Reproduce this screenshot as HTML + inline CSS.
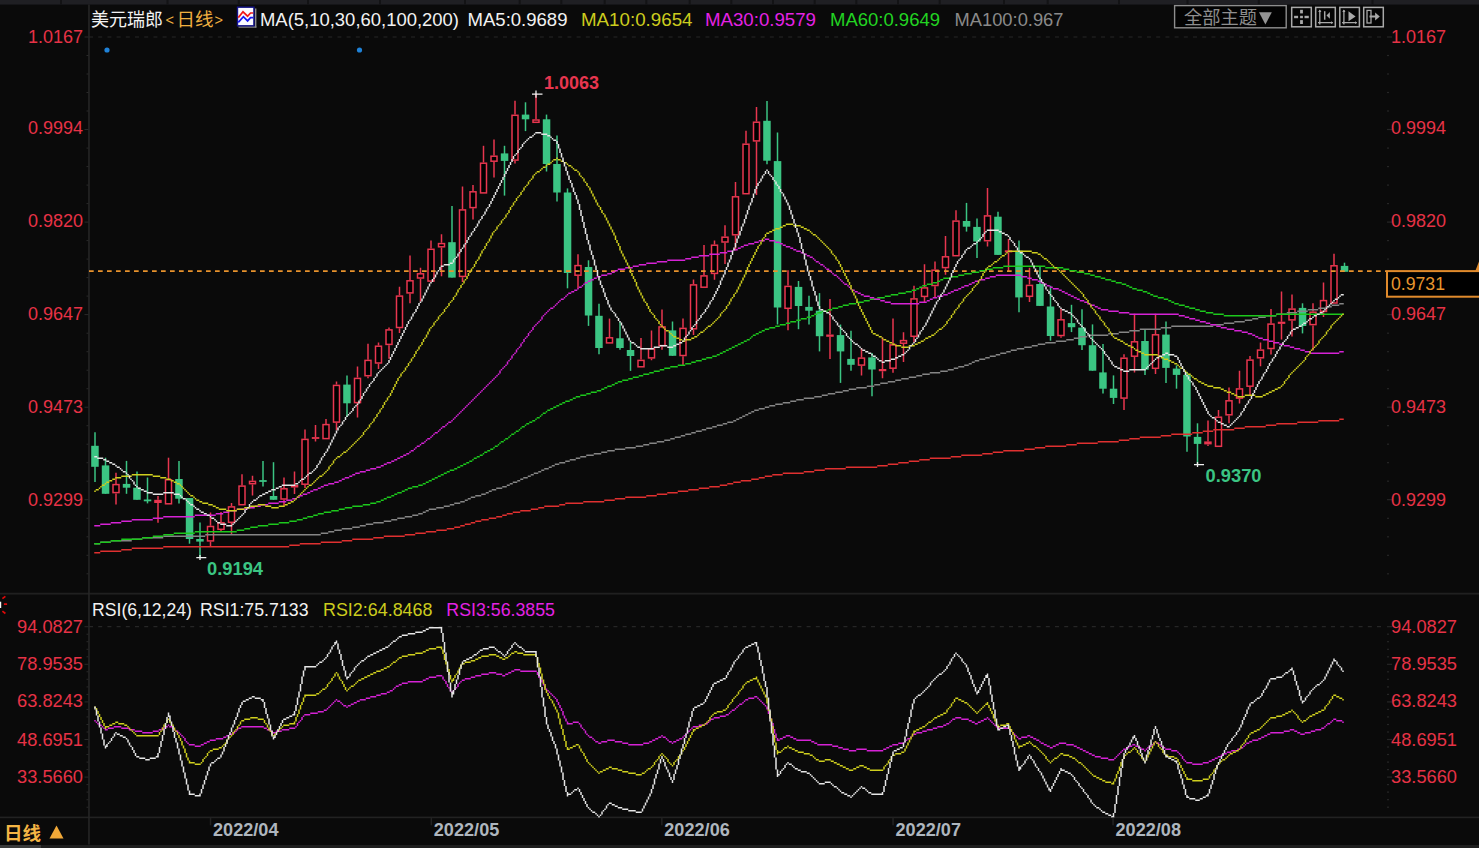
<!DOCTYPE html>
<html lang="zh"><head><meta charset="utf-8"><title>美元瑞郎 日线</title>
<style>html,body{margin:0;padding:0;background:#0a0a0a;overflow:hidden}svg{display:block}text{font-family:"Liberation Sans","Noto Sans CJK SC",sans-serif}</style>
</head><body>
<svg width="1479" height="848" viewBox="0 0 1479 848">
<rect width="1479" height="848" fill="#0a0a0a"/>
<rect x="0" y="0" width="1479" height="4.6" fill="#1f1f23"/>
<rect x="60" y="0" width="2" height="4.5" fill="#131315"/>
<rect x="166.5" y="0" width="2" height="4.5" fill="#131315"/>
<rect x="237.8" y="0" width="2" height="4.5" fill="#131315"/>
<rect x="307" y="0" width="2" height="4.5" fill="#131315"/>
<rect x="379" y="0" width="2" height="4.5" fill="#131315"/>
<rect x="464" y="0" width="2" height="4.5" fill="#131315"/>
<rect x="518.7" y="0" width="2" height="4.5" fill="#131315"/>
<rect x="560.3" y="0" width="2" height="4.5" fill="#131315"/>
<rect x="603.7" y="0" width="2" height="4.5" fill="#131315"/>
<rect x="645.3" y="0" width="2" height="4.5" fill="#131315"/>
<rect x="688.7" y="0" width="2" height="4.5" fill="#131315"/>
<rect x="730.3" y="0" width="2" height="4.5" fill="#131315"/>
<rect x="772" y="0" width="2" height="4.5" fill="#131315"/>
<rect x="813.7" y="0" width="2" height="4.5" fill="#131315"/>
<rect x="855.3" y="0" width="2" height="4.5" fill="#131315"/>
<rect x="897" y="0" width="2" height="4.5" fill="#131315"/>
<rect x="938.7" y="0" width="2" height="4.5" fill="#131315"/>
<rect x="1003" y="0" width="2" height="4.5" fill="#131315"/>
<rect x="1046.7" y="0" width="2" height="4.5" fill="#131315"/>
<rect x="1118" y="0" width="2" height="4.5" fill="#131315"/>
<rect x="1186.5" y="0" width="2" height="4.5" fill="#131315"/>
<rect x="1257.8" y="0" width="2" height="4.5" fill="#131315"/>
<rect x="1371.5" y="0" width="2" height="4.5" fill="#131315"/>
<rect x="0" y="592.7" width="1479" height="1.9" fill="#202020"/>
<rect x="0" y="816.6" width="1479" height="1.6" fill="#222222"/>
<rect x="88.2" y="4.5" width="1.5" height="840" fill="#272727"/>
<rect x="0" y="845" width="1479" height="3" fill="#1e1e1e"/>
<rect x="0" y="845" width="41" height="3" fill="#3a3a3a"/>
<line x1="89" y1="37" x2="1386" y2="37" stroke="#262626" stroke-width="1.2" stroke-dasharray="4,5.2"/>
<line x1="89" y1="626.7" x2="1386" y2="626.7" stroke="#262626" stroke-width="1.2" stroke-dasharray="4,5.2"/>
<rect x="84.5" y="36.5" width="4" height="1" fill="#2a2a2a"/><rect x="1387" y="36.4" width="5" height="1.2" fill="#262626"/><rect x="86.5" y="55" width="2" height="1" fill="#2a2a2a"/><rect x="1387" y="54.9" width="2" height="1.2" fill="#262626"/><rect x="86.5" y="73.5" width="2" height="1" fill="#2a2a2a"/><rect x="1387" y="73.4" width="2" height="1.2" fill="#262626"/><rect x="86.5" y="92" width="2" height="1" fill="#2a2a2a"/><rect x="1387" y="91.9" width="2" height="1.2" fill="#262626"/><rect x="86.5" y="110.5" width="2" height="1" fill="#2a2a2a"/><rect x="1387" y="110.4" width="2" height="1.2" fill="#262626"/><rect x="84.5" y="129" width="4" height="1" fill="#2a2a2a"/><rect x="1387" y="128.9" width="5" height="1.2" fill="#262626"/><rect x="86.5" y="147.6" width="2" height="1" fill="#2a2a2a"/><rect x="1387" y="147.5" width="2" height="1.2" fill="#262626"/><rect x="86.5" y="166.1" width="2" height="1" fill="#2a2a2a"/><rect x="1387" y="166" width="2" height="1.2" fill="#262626"/><rect x="86.5" y="184.6" width="2" height="1" fill="#2a2a2a"/><rect x="1387" y="184.5" width="2" height="1.2" fill="#262626"/><rect x="86.5" y="203.1" width="2" height="1" fill="#2a2a2a"/><rect x="1387" y="203" width="2" height="1.2" fill="#262626"/><rect x="84.5" y="221.6" width="4" height="1" fill="#2a2a2a"/><rect x="1387" y="221.5" width="5" height="1.2" fill="#262626"/><rect x="86.5" y="240.1" width="2" height="1" fill="#2a2a2a"/><rect x="1387" y="240" width="2" height="1.2" fill="#262626"/><rect x="86.5" y="258.6" width="2" height="1" fill="#2a2a2a"/><rect x="1387" y="258.5" width="2" height="1.2" fill="#262626"/><rect x="86.5" y="277.1" width="2" height="1" fill="#2a2a2a"/><rect x="1387" y="277" width="2" height="1.2" fill="#262626"/><rect x="86.5" y="295.6" width="2" height="1" fill="#2a2a2a"/><rect x="1387" y="295.5" width="2" height="1.2" fill="#262626"/><rect x="84.5" y="314.1" width="4" height="1" fill="#2a2a2a"/><rect x="1387" y="314" width="5" height="1.2" fill="#262626"/><rect x="86.5" y="332.7" width="2" height="1" fill="#2a2a2a"/><rect x="1387" y="332.6" width="2" height="1.2" fill="#262626"/><rect x="86.5" y="351.2" width="2" height="1" fill="#2a2a2a"/><rect x="1387" y="351.1" width="2" height="1.2" fill="#262626"/><rect x="86.5" y="369.7" width="2" height="1" fill="#2a2a2a"/><rect x="1387" y="369.6" width="2" height="1.2" fill="#262626"/><rect x="86.5" y="388.2" width="2" height="1" fill="#2a2a2a"/><rect x="1387" y="388.1" width="2" height="1.2" fill="#262626"/><rect x="84.5" y="406.7" width="4" height="1" fill="#2a2a2a"/><rect x="1387" y="406.6" width="5" height="1.2" fill="#262626"/><rect x="86.5" y="425.2" width="2" height="1" fill="#2a2a2a"/><rect x="1387" y="425.1" width="2" height="1.2" fill="#262626"/><rect x="86.5" y="443.7" width="2" height="1" fill="#2a2a2a"/><rect x="1387" y="443.6" width="2" height="1.2" fill="#262626"/><rect x="86.5" y="462.2" width="2" height="1" fill="#2a2a2a"/><rect x="1387" y="462.1" width="2" height="1.2" fill="#262626"/><rect x="86.5" y="480.7" width="2" height="1" fill="#2a2a2a"/><rect x="1387" y="480.6" width="2" height="1.2" fill="#262626"/><rect x="84.5" y="499.2" width="4" height="1" fill="#2a2a2a"/><rect x="1387" y="499.1" width="5" height="1.2" fill="#262626"/><rect x="86.5" y="517.8" width="2" height="1" fill="#2a2a2a"/><rect x="1387" y="517.7" width="2" height="1.2" fill="#262626"/><rect x="86.5" y="536.3" width="2" height="1" fill="#2a2a2a"/><rect x="1387" y="536.2" width="2" height="1.2" fill="#262626"/><rect x="86.5" y="554.8" width="2" height="1" fill="#2a2a2a"/><rect x="1387" y="554.7" width="2" height="1.2" fill="#262626"/><rect x="86.5" y="573.3" width="2" height="1" fill="#2a2a2a"/><rect x="1387" y="573.2" width="2" height="1.2" fill="#262626"/>
<rect x="84.5" y="626.2" width="4" height="1" fill="#2a2a2a"/><rect x="1387" y="626.1" width="5" height="1.2" fill="#262626"/><rect x="86.5" y="633.7" width="2" height="1" fill="#2a2a2a"/><rect x="1387" y="633.6" width="2" height="1.2" fill="#262626"/><rect x="86.5" y="641.2" width="2" height="1" fill="#2a2a2a"/><rect x="1387" y="641.1" width="2" height="1.2" fill="#262626"/><rect x="86.5" y="648.8" width="2" height="1" fill="#2a2a2a"/><rect x="1387" y="648.7" width="2" height="1.2" fill="#262626"/><rect x="86.5" y="656.3" width="2" height="1" fill="#2a2a2a"/><rect x="1387" y="656.2" width="2" height="1.2" fill="#262626"/><rect x="84.5" y="663.8" width="4" height="1" fill="#2a2a2a"/><rect x="1387" y="663.7" width="5" height="1.2" fill="#262626"/><rect x="86.5" y="671.3" width="2" height="1" fill="#2a2a2a"/><rect x="1387" y="671.2" width="2" height="1.2" fill="#262626"/><rect x="86.5" y="678.8" width="2" height="1" fill="#2a2a2a"/><rect x="1387" y="678.7" width="2" height="1.2" fill="#262626"/><rect x="86.5" y="686.4" width="2" height="1" fill="#2a2a2a"/><rect x="1387" y="686.3" width="2" height="1.2" fill="#262626"/><rect x="86.5" y="693.9" width="2" height="1" fill="#2a2a2a"/><rect x="1387" y="693.8" width="2" height="1.2" fill="#262626"/><rect x="84.5" y="701.4" width="4" height="1" fill="#2a2a2a"/><rect x="1387" y="701.3" width="5" height="1.2" fill="#262626"/><rect x="86.5" y="708.9" width="2" height="1" fill="#2a2a2a"/><rect x="1387" y="708.8" width="2" height="1.2" fill="#262626"/><rect x="86.5" y="716.4" width="2" height="1" fill="#2a2a2a"/><rect x="1387" y="716.3" width="2" height="1.2" fill="#262626"/><rect x="86.5" y="724" width="2" height="1" fill="#2a2a2a"/><rect x="1387" y="723.9" width="2" height="1.2" fill="#262626"/><rect x="86.5" y="731.5" width="2" height="1" fill="#2a2a2a"/><rect x="1387" y="731.4" width="2" height="1.2" fill="#262626"/><rect x="84.5" y="739" width="4" height="1" fill="#2a2a2a"/><rect x="1387" y="738.9" width="5" height="1.2" fill="#262626"/><rect x="86.5" y="746.5" width="2" height="1" fill="#2a2a2a"/><rect x="1387" y="746.4" width="2" height="1.2" fill="#262626"/><rect x="86.5" y="754" width="2" height="1" fill="#2a2a2a"/><rect x="1387" y="753.9" width="2" height="1.2" fill="#262626"/><rect x="86.5" y="761.6" width="2" height="1" fill="#2a2a2a"/><rect x="1387" y="761.5" width="2" height="1.2" fill="#262626"/><rect x="86.5" y="769.1" width="2" height="1" fill="#2a2a2a"/><rect x="1387" y="769" width="2" height="1.2" fill="#262626"/><rect x="84.5" y="776.6" width="4" height="1" fill="#2a2a2a"/><rect x="1387" y="776.5" width="5" height="1.2" fill="#262626"/><rect x="86.5" y="784.1" width="2" height="1" fill="#2a2a2a"/><rect x="1387" y="784" width="2" height="1.2" fill="#262626"/><rect x="86.5" y="791.6" width="2" height="1" fill="#2a2a2a"/><rect x="1387" y="791.5" width="2" height="1.2" fill="#262626"/><rect x="86.5" y="799.2" width="2" height="1" fill="#2a2a2a"/><rect x="1387" y="799.1" width="2" height="1.2" fill="#262626"/><rect x="86.5" y="806.7" width="2" height="1" fill="#2a2a2a"/><rect x="1387" y="806.6" width="2" height="1.2" fill="#262626"/>
<text x="28" y="43" font-size="18.6" fill="#e63246" text-anchor="start" font-weight="normal" textLength="55" lengthAdjust="spacingAndGlyphs">1.0167</text>
<text x="1391" y="43" font-size="18.6" fill="#e63246" text-anchor="start" font-weight="normal" textLength="55" lengthAdjust="spacingAndGlyphs">1.0167</text>
<text x="28" y="134.3" font-size="18.6" fill="#e63246" text-anchor="start" font-weight="normal" textLength="55" lengthAdjust="spacingAndGlyphs">0.9994</text>
<text x="1391" y="134.3" font-size="18.6" fill="#e63246" text-anchor="start" font-weight="normal" textLength="55" lengthAdjust="spacingAndGlyphs">0.9994</text>
<text x="28" y="227.4" font-size="18.6" fill="#e63246" text-anchor="start" font-weight="normal" textLength="55" lengthAdjust="spacingAndGlyphs">0.9820</text>
<text x="1391" y="227.4" font-size="18.6" fill="#e63246" text-anchor="start" font-weight="normal" textLength="55" lengthAdjust="spacingAndGlyphs">0.9820</text>
<text x="28" y="320.2" font-size="18.6" fill="#e63246" text-anchor="start" font-weight="normal" textLength="55" lengthAdjust="spacingAndGlyphs">0.9647</text>
<text x="1391" y="320.2" font-size="18.6" fill="#e63246" text-anchor="start" font-weight="normal" textLength="55" lengthAdjust="spacingAndGlyphs">0.9647</text>
<text x="28" y="413" font-size="18.6" fill="#e63246" text-anchor="start" font-weight="normal" textLength="55" lengthAdjust="spacingAndGlyphs">0.9473</text>
<text x="1391" y="413" font-size="18.6" fill="#e63246" text-anchor="start" font-weight="normal" textLength="55" lengthAdjust="spacingAndGlyphs">0.9473</text>
<text x="28" y="505.7" font-size="18.6" fill="#e63246" text-anchor="start" font-weight="normal" textLength="55" lengthAdjust="spacingAndGlyphs">0.9299</text>
<text x="1391" y="505.7" font-size="18.6" fill="#e63246" text-anchor="start" font-weight="normal" textLength="55" lengthAdjust="spacingAndGlyphs">0.9299</text>
<text x="17" y="632.5" font-size="18.6" fill="#e63246" text-anchor="start" font-weight="normal" textLength="66" lengthAdjust="spacingAndGlyphs">94.0827</text>
<text x="1391" y="632.5" font-size="18.6" fill="#e63246" text-anchor="start" font-weight="normal" textLength="66" lengthAdjust="spacingAndGlyphs">94.0827</text>
<text x="17" y="670.1" font-size="18.6" fill="#e63246" text-anchor="start" font-weight="normal" textLength="66" lengthAdjust="spacingAndGlyphs">78.9535</text>
<text x="1391" y="670.1" font-size="18.6" fill="#e63246" text-anchor="start" font-weight="normal" textLength="66" lengthAdjust="spacingAndGlyphs">78.9535</text>
<text x="17" y="707.3" font-size="18.6" fill="#e63246" text-anchor="start" font-weight="normal" textLength="66" lengthAdjust="spacingAndGlyphs">63.8243</text>
<text x="1391" y="707.3" font-size="18.6" fill="#e63246" text-anchor="start" font-weight="normal" textLength="66" lengthAdjust="spacingAndGlyphs">63.8243</text>
<text x="17" y="745.9" font-size="18.6" fill="#e63246" text-anchor="start" font-weight="normal" textLength="66" lengthAdjust="spacingAndGlyphs">48.6951</text>
<text x="1391" y="745.9" font-size="18.6" fill="#e63246" text-anchor="start" font-weight="normal" textLength="66" lengthAdjust="spacingAndGlyphs">48.6951</text>
<text x="17" y="783.3" font-size="18.6" fill="#e63246" text-anchor="start" font-weight="normal" textLength="66" lengthAdjust="spacingAndGlyphs">33.5660</text>
<text x="1391" y="783.3" font-size="18.6" fill="#e63246" text-anchor="start" font-weight="normal" textLength="66" lengthAdjust="spacingAndGlyphs">33.5660</text>
<g><path d="M95 432.3V482" stroke="#3bc583" stroke-width="1.5"/><rect x="91.2" y="445.8" width="7.5" height="21" fill="#3bc583"/><path d="M105.5 457.7V493.8" stroke="#3bc583" stroke-width="1.5"/><rect x="101.8" y="465.4" width="7.5" height="28.4" fill="#3bc583"/><path d="M116 472.8V483.9M116 493.4V504.5" stroke="#e8364f" stroke-width="1.5"/><rect x="113" y="484.6" width="6" height="8" fill="#000" stroke="#e8364f" stroke-width="1.5"/><path d="M126.5 460.9V493.8" stroke="#3bc583" stroke-width="1.5"/><rect x="122.8" y="483.9" width="7.5" height="3.8" fill="#3bc583"/><path d="M137 471.5V499.8" stroke="#3bc583" stroke-width="1.5"/><rect x="133.2" y="487.7" width="7.5" height="12.1" fill="#3bc583"/><path d="M147.5 477.5V503.4" stroke="#3bc583" stroke-width="1.5"/><rect x="143.8" y="499.5" width="7.5" height="1.8" fill="#3bc583"/><path d="M158 496V499.8M158 503V522.7" stroke="#e8364f" stroke-width="1.5"/><rect x="154.2" y="499.8" width="7.5" height="3.2" fill="#e8364f"/><path d="M168.5 457.7V479M168.5 504.5V504.5" stroke="#e8364f" stroke-width="1.5"/><rect x="165.5" y="479.8" width="6" height="24" fill="#000" stroke="#e8364f" stroke-width="1.5"/><path d="M179 461V503.4" stroke="#3bc583" stroke-width="1.5"/><rect x="175.2" y="479" width="7.5" height="19.7" fill="#3bc583"/><path d="M189.5 498V543.7" stroke="#3bc583" stroke-width="1.5"/><rect x="185.8" y="498" width="7.5" height="41" fill="#3bc583"/><path d="M200 522.5V558" stroke="#3bc583" stroke-width="1.5"/><rect x="196.2" y="539" width="7.5" height="2.6" fill="#3bc583"/><path d="M210.5 512.5V525.7M210.5 541.6V546.5" stroke="#e8364f" stroke-width="1.5"/><rect x="207.5" y="526.5" width="6" height="14.4" fill="#000" stroke="#e8364f" stroke-width="1.5"/><path d="M221 511.9V522M221 530V531.6" stroke="#e8364f" stroke-width="1.5"/><rect x="218" y="522.8" width="6" height="6.5" fill="#000" stroke="#e8364f" stroke-width="1.5"/><path d="M231.5 503V506.2M231.5 523.1V534.4" stroke="#e8364f" stroke-width="1.5"/><rect x="228.5" y="506.9" width="6" height="15.4" fill="#000" stroke="#e8364f" stroke-width="1.5"/><path d="M242 474.3V485.4M242 505.5V505.5" stroke="#e8364f" stroke-width="1.5"/><rect x="239" y="486.1" width="6" height="18.6" fill="#000" stroke="#e8364f" stroke-width="1.5"/><path d="M252.5 475.8V480.7M252.5 484.5V495.5" stroke="#e8364f" stroke-width="1.5"/><rect x="249.5" y="481.4" width="6" height="2.3" fill="#000" stroke="#e8364f" stroke-width="1.5"/><path d="M263 461V486.6" stroke="#3bc583" stroke-width="1.5"/><rect x="259.2" y="480.1" width="7.5" height="1.8" fill="#3bc583"/><path d="M273.5 462.2V499.8" stroke="#3bc583" stroke-width="1.5"/><rect x="269.8" y="496" width="7.5" height="3.8" fill="#3bc583"/><path d="M284 477.6V488M284 499.7V506" stroke="#e8364f" stroke-width="1.5"/><rect x="281" y="488.8" width="6" height="10.2" fill="#000" stroke="#e8364f" stroke-width="1.5"/><path d="M294.5 471.6V485M294.5 487.5V494" stroke="#e8364f" stroke-width="1.5"/><rect x="290.8" y="485" width="7.5" height="2.5" fill="#e8364f"/><path d="M305 429.6V438.7M305 485V488" stroke="#e8364f" stroke-width="1.5"/><rect x="302" y="439.4" width="6" height="44.8" fill="#000" stroke="#e8364f" stroke-width="1.5"/><path d="M315.5 425V437.1M315.5 438.8V441.5" stroke="#e8364f" stroke-width="1.5"/><rect x="311.8" y="437.1" width="7.5" height="1.8" fill="#e8364f"/><path d="M326 419V423.9M326 439.4V439.4" stroke="#e8364f" stroke-width="1.5"/><rect x="323" y="424.6" width="6" height="14" fill="#000" stroke="#e8364f" stroke-width="1.5"/><path d="M336.5 381.4V384.6M336.5 422.8V430.2" stroke="#e8364f" stroke-width="1.5"/><rect x="333.5" y="385.4" width="6" height="36.7" fill="#000" stroke="#e8364f" stroke-width="1.5"/><path d="M347 375.5V416.9" stroke="#3bc583" stroke-width="1.5"/><rect x="343.2" y="384.6" width="7.5" height="18.7" fill="#3bc583"/><path d="M357.5 366.5V377.6M357.5 403.3V417.5" stroke="#e8364f" stroke-width="1.5"/><rect x="354.5" y="378.4" width="6" height="24.2" fill="#000" stroke="#e8364f" stroke-width="1.5"/><path d="M368 343.8V359.7M368 376.5V378.2" stroke="#e8364f" stroke-width="1.5"/><rect x="365" y="360.4" width="6" height="15.3" fill="#000" stroke="#e8364f" stroke-width="1.5"/><path d="M378.5 342.4V345.5M378.5 363.8V369" stroke="#e8364f" stroke-width="1.5"/><rect x="375.5" y="346.2" width="6" height="16.8" fill="#000" stroke="#e8364f" stroke-width="1.5"/><path d="M389 327.5V329.2M389 345.2V358.7" stroke="#e8364f" stroke-width="1.5"/><rect x="386" y="329.9" width="6" height="14.5" fill="#000" stroke="#e8364f" stroke-width="1.5"/><path d="M399.5 286.8V295.3M399.5 328.2V333" stroke="#e8364f" stroke-width="1.5"/><rect x="396.5" y="296.1" width="6" height="31.4" fill="#000" stroke="#e8364f" stroke-width="1.5"/><path d="M410 255.4V280M410 293.6V303.3" stroke="#e8364f" stroke-width="1.5"/><rect x="407" y="280.8" width="6" height="12.1" fill="#000" stroke="#e8364f" stroke-width="1.5"/><path d="M420.5 267.7V273M420.5 278.7V301.6" stroke="#e8364f" stroke-width="1.5"/><rect x="417.5" y="273.8" width="6" height="4.2" fill="#000" stroke="#e8364f" stroke-width="1.5"/><path d="M431 240.5V248.6M431 281.9V281.9" stroke="#e8364f" stroke-width="1.5"/><rect x="428" y="249.3" width="6" height="31.8" fill="#000" stroke="#e8364f" stroke-width="1.5"/><path d="M441.5 234.3V242.8M441.5 247.5V276.2" stroke="#e8364f" stroke-width="1.5"/><rect x="438.5" y="243.6" width="6" height="3.2" fill="#000" stroke="#e8364f" stroke-width="1.5"/><path d="M452 206V277.6" stroke="#3bc583" stroke-width="1.5"/><rect x="448.2" y="242.2" width="7.5" height="35.4" fill="#3bc583"/><path d="M462.5 186.5V209.2M462.5 277.2V282.1" stroke="#e8364f" stroke-width="1.5"/><rect x="459.5" y="209.9" width="6" height="66.5" fill="#000" stroke="#e8364f" stroke-width="1.5"/><path d="M473 185V191M473 208.3V219.4" stroke="#e8364f" stroke-width="1.5"/><rect x="470" y="191.8" width="6" height="15.8" fill="#000" stroke="#e8364f" stroke-width="1.5"/><path d="M483.5 145.8V162.4M483.5 193.6V193.6" stroke="#e8364f" stroke-width="1.5"/><rect x="480.5" y="163.2" width="6" height="29.7" fill="#000" stroke="#e8364f" stroke-width="1.5"/><path d="M494 139.6V155.4M494 161.9V177.5" stroke="#e8364f" stroke-width="1.5"/><rect x="491" y="156.2" width="6" height="5" fill="#000" stroke="#e8364f" stroke-width="1.5"/><path d="M504.5 145.8V195.6" stroke="#3bc583" stroke-width="1.5"/><rect x="500.8" y="153.4" width="7.5" height="7.5" fill="#3bc583"/><path d="M515 100.8V114.6M515 160.9V163.4" stroke="#e8364f" stroke-width="1.5"/><rect x="512" y="115.3" width="6" height="44.8" fill="#000" stroke="#e8364f" stroke-width="1.5"/><path d="M525.5 102.3V131.1" stroke="#3bc583" stroke-width="1.5"/><rect x="521.8" y="114.6" width="7.5" height="4.7" fill="#3bc583"/><path d="M536 93.8V119.3M536 123.1V123.1" stroke="#e8364f" stroke-width="1.5"/><rect x="533" y="120" width="6" height="2.3" fill="#000" stroke="#e8364f" stroke-width="1.5"/><path d="M546.5 114.6V171.5" stroke="#3bc583" stroke-width="1.5"/><rect x="542.8" y="119.3" width="7.5" height="44.7" fill="#3bc583"/><path d="M557 135.4V201.4" stroke="#3bc583" stroke-width="1.5"/><rect x="553.2" y="164" width="7.5" height="28.5" fill="#3bc583"/><path d="M567.5 188.4V288.3" stroke="#3bc583" stroke-width="1.5"/><rect x="563.8" y="192.5" width="7.5" height="80.5" fill="#3bc583"/><path d="M578 254.3V264.9M578 276V288.3" stroke="#e8364f" stroke-width="1.5"/><rect x="575" y="265.6" width="6" height="9.6" fill="#000" stroke="#e8364f" stroke-width="1.5"/><path d="M588.5 260.3V325.9" stroke="#3bc583" stroke-width="1.5"/><rect x="584.8" y="267" width="7.5" height="48.5" fill="#3bc583"/><path d="M599 303.8V354.2" stroke="#3bc583" stroke-width="1.5"/><rect x="595.2" y="315.8" width="7.5" height="32.2" fill="#3bc583"/><path d="M609.5 318.6V337M609.5 343.6V343.6" stroke="#e8364f" stroke-width="1.5"/><rect x="606.5" y="337.8" width="6" height="5.1" fill="#000" stroke="#e8364f" stroke-width="1.5"/><path d="M620 322V349.7" stroke="#3bc583" stroke-width="1.5"/><rect x="616.2" y="338.3" width="7.5" height="9.7" fill="#3bc583"/><path d="M630.5 342V370.9" stroke="#3bc583" stroke-width="1.5"/><rect x="626.8" y="350" width="7.5" height="6" fill="#3bc583"/><path d="M641 338V359.6M641 367.5V367.5" stroke="#e8364f" stroke-width="1.5"/><rect x="638" y="360.4" width="6" height="6.4" fill="#000" stroke="#e8364f" stroke-width="1.5"/><path d="M651.5 330.5V348M651.5 358.6V360.3" stroke="#e8364f" stroke-width="1.5"/><rect x="648.5" y="348.8" width="6" height="9.1" fill="#000" stroke="#e8364f" stroke-width="1.5"/><path d="M662 309.6V326.2M662 346.4V349.7" stroke="#e8364f" stroke-width="1.5"/><rect x="659" y="326.9" width="6" height="18.7" fill="#000" stroke="#e8364f" stroke-width="1.5"/><path d="M672.5 321.5V355.8" stroke="#3bc583" stroke-width="1.5"/><rect x="668.8" y="330.4" width="7.5" height="25.4" fill="#3bc583"/><path d="M683 318.5V327.7M683 356.3V364.9" stroke="#e8364f" stroke-width="1.5"/><rect x="680" y="328.4" width="6" height="27.1" fill="#000" stroke="#e8364f" stroke-width="1.5"/><path d="M693.5 279.4V284.1M693.5 329.5V335" stroke="#e8364f" stroke-width="1.5"/><rect x="690.5" y="284.9" width="6" height="43.9" fill="#000" stroke="#e8364f" stroke-width="1.5"/><path d="M704 245.1V275.1M704 287.9V287.9" stroke="#e8364f" stroke-width="1.5"/><rect x="701" y="275.9" width="6" height="11.3" fill="#000" stroke="#e8364f" stroke-width="1.5"/><path d="M714.5 240.6V244.4M714.5 274.1V279.8" stroke="#e8364f" stroke-width="1.5"/><rect x="711.5" y="245.2" width="6" height="28.2" fill="#000" stroke="#e8364f" stroke-width="1.5"/><path d="M725 225.3V236.4M725 242.7V263.9" stroke="#e8364f" stroke-width="1.5"/><rect x="722" y="237.2" width="6" height="4.8" fill="#000" stroke="#e8364f" stroke-width="1.5"/><path d="M735.5 182V196M735.5 235.5V250.5" stroke="#e8364f" stroke-width="1.5"/><rect x="732.5" y="196.8" width="6" height="38" fill="#000" stroke="#e8364f" stroke-width="1.5"/><path d="M746 130.8V143.5M746 194.5V194.5" stroke="#e8364f" stroke-width="1.5"/><rect x="743" y="144.2" width="6" height="49.5" fill="#000" stroke="#e8364f" stroke-width="1.5"/><path d="M756.5 107V121.4M756.5 141.6V195.1" stroke="#e8364f" stroke-width="1.5"/><rect x="753.5" y="122.2" width="6" height="18.7" fill="#000" stroke="#e8364f" stroke-width="1.5"/><path d="M767 101V164.3" stroke="#3bc583" stroke-width="1.5"/><rect x="763.2" y="120.8" width="7.5" height="39.9" fill="#3bc583"/><path d="M777.5 132.5V324.5" stroke="#3bc583" stroke-width="1.5"/><rect x="773.8" y="161.1" width="7.5" height="146.4" fill="#3bc583"/><path d="M788 270.3V285.6M788 309V330.2" stroke="#e8364f" stroke-width="1.5"/><rect x="785" y="286.4" width="6" height="21.9" fill="#000" stroke="#e8364f" stroke-width="1.5"/><path d="M798.5 281V329.2" stroke="#3bc583" stroke-width="1.5"/><rect x="794.8" y="286.9" width="7.5" height="19.1" fill="#3bc583"/><path d="M809 295.8V324.5" stroke="#3bc583" stroke-width="1.5"/><rect x="805.2" y="306.9" width="7.5" height="3.8" fill="#3bc583"/><path d="M819.5 293.1V351.4" stroke="#3bc583" stroke-width="1.5"/><rect x="815.8" y="310.7" width="7.5" height="25.5" fill="#3bc583"/><path d="M830 299V334.5M830 336.8V358.9" stroke="#e8364f" stroke-width="1.5"/><rect x="826.2" y="334.5" width="7.5" height="2.3" fill="#e8364f"/><path d="M840.5 324.5V382.9" stroke="#3bc583" stroke-width="1.5"/><rect x="836.8" y="335.1" width="7.5" height="16.3" fill="#3bc583"/><path d="M851 330.8V370.8" stroke="#3bc583" stroke-width="1.5"/><rect x="847.2" y="358.9" width="7.5" height="5.9" fill="#3bc583"/><path d="M861.5 348.3V357.4M861.5 365.9V375.4" stroke="#e8364f" stroke-width="1.5"/><rect x="858.5" y="358.1" width="6" height="7" fill="#000" stroke="#e8364f" stroke-width="1.5"/><path d="M872 353V396.2" stroke="#3bc583" stroke-width="1.5"/><rect x="868.2" y="357.4" width="7.5" height="12.1" fill="#3bc583"/><path d="M882.5 337.6V369M882.5 371.2V378.2" stroke="#e8364f" stroke-width="1.5"/><rect x="878.8" y="369" width="7.5" height="2.2" fill="#e8364f"/><path d="M893 318.5V344.2M893 369V372.7" stroke="#e8364f" stroke-width="1.5"/><rect x="890" y="344.9" width="6" height="23.3" fill="#000" stroke="#e8364f" stroke-width="1.5"/><path d="M903.5 332.2V339.9M903.5 344V362" stroke="#e8364f" stroke-width="1.5"/><rect x="900.5" y="340.6" width="6" height="2.6" fill="#000" stroke="#e8364f" stroke-width="1.5"/><path d="M914 285.7V298.2M914 337.1V342.2" stroke="#e8364f" stroke-width="1.5"/><rect x="911" y="298.9" width="6" height="37.4" fill="#000" stroke="#e8364f" stroke-width="1.5"/><path d="M924.5 264.2V287.1M924.5 297.1V303" stroke="#e8364f" stroke-width="1.5"/><rect x="921.5" y="287.9" width="6" height="8.5" fill="#000" stroke="#e8364f" stroke-width="1.5"/><path d="M935 261.5V269.5M935 286.3V297.7" stroke="#e8364f" stroke-width="1.5"/><rect x="932" y="270.2" width="6" height="15.3" fill="#000" stroke="#e8364f" stroke-width="1.5"/><path d="M945.5 236.1V256M945.5 268.3V274.8" stroke="#e8364f" stroke-width="1.5"/><rect x="942.5" y="256.8" width="6" height="10.8" fill="#000" stroke="#e8364f" stroke-width="1.5"/><path d="M956 210.3V220.3M956 256.4V256.4" stroke="#e8364f" stroke-width="1.5"/><rect x="953" y="221.1" width="6" height="34.6" fill="#000" stroke="#e8364f" stroke-width="1.5"/><path d="M966.5 202.9V231.6" stroke="#3bc583" stroke-width="1.5"/><rect x="962.8" y="221" width="7.5" height="5.7" fill="#3bc583"/><path d="M977 218.4V258.1" stroke="#3bc583" stroke-width="1.5"/><rect x="973.2" y="226.9" width="7.5" height="14.6" fill="#3bc583"/><path d="M987.5 188V215.2M987.5 241.5V246.4" stroke="#e8364f" stroke-width="1.5"/><rect x="984.5" y="215.9" width="6" height="24.8" fill="#000" stroke="#e8364f" stroke-width="1.5"/><path d="M998 211.8V254.9" stroke="#3bc583" stroke-width="1.5"/><rect x="994.2" y="216.7" width="7.5" height="38.2" fill="#3bc583"/><path d="M1008.5 239V250.3M1008.5 252.4V271.9" stroke="#e8364f" stroke-width="1.5"/><rect x="1004.8" y="250.3" width="7.5" height="2.1" fill="#e8364f"/><path d="M1019 240.5V312.3" stroke="#3bc583" stroke-width="1.5"/><rect x="1015.2" y="250.7" width="7.5" height="46.7" fill="#3bc583"/><path d="M1029.5 267.7V284.6M1029.5 297V302" stroke="#e8364f" stroke-width="1.5"/><rect x="1026.5" y="285.4" width="6" height="10.9" fill="#000" stroke="#e8364f" stroke-width="1.5"/><path d="M1040 267V305.9" stroke="#3bc583" stroke-width="1.5"/><rect x="1036.2" y="284" width="7.5" height="21.9" fill="#3bc583"/><path d="M1050.5 285.7V340.7" stroke="#3bc583" stroke-width="1.5"/><rect x="1046.8" y="306.5" width="7.5" height="29.5" fill="#3bc583"/><path d="M1061 309V319M1061 336.2V337.8" stroke="#e8364f" stroke-width="1.5"/><rect x="1058" y="319.8" width="6" height="15.7" fill="#000" stroke="#e8364f" stroke-width="1.5"/><path d="M1071.5 304.8V332.1" stroke="#3bc583" stroke-width="1.5"/><rect x="1067.8" y="323.1" width="7.5" height="4.1" fill="#3bc583"/><path d="M1082 309.3V349.9" stroke="#3bc583" stroke-width="1.5"/><rect x="1078.2" y="327.6" width="7.5" height="17.6" fill="#3bc583"/><path d="M1092.5 324.4V370.7" stroke="#3bc583" stroke-width="1.5"/><rect x="1088.8" y="345.2" width="7.5" height="25.5" fill="#3bc583"/><path d="M1103 344.1V393.6" stroke="#3bc583" stroke-width="1.5"/><rect x="1099.2" y="372.4" width="7.5" height="16.3" fill="#3bc583"/><path d="M1113.5 375.4V404" stroke="#3bc583" stroke-width="1.5"/><rect x="1109.8" y="388.7" width="7.5" height="9.2" fill="#3bc583"/><path d="M1124 354.3V357.5M1124 398.9V410" stroke="#e8364f" stroke-width="1.5"/><rect x="1121" y="358.2" width="6" height="39.9" fill="#000" stroke="#e8364f" stroke-width="1.5"/><path d="M1134.5 313.8V341M1134.5 356.9V372.4" stroke="#e8364f" stroke-width="1.5"/><rect x="1131.5" y="341.8" width="6" height="14.4" fill="#000" stroke="#e8364f" stroke-width="1.5"/><path d="M1145 328.9V375" stroke="#3bc583" stroke-width="1.5"/><rect x="1141.2" y="341" width="7.5" height="28.6" fill="#3bc583"/><path d="M1155.5 313.8V334M1155.5 369V373.9" stroke="#e8364f" stroke-width="1.5"/><rect x="1152.5" y="334.8" width="6" height="33.5" fill="#000" stroke="#e8364f" stroke-width="1.5"/><path d="M1166 321.4V383" stroke="#3bc583" stroke-width="1.5"/><rect x="1162.2" y="334.6" width="7.5" height="33.3" fill="#3bc583"/><path d="M1176.5 365.4V388.7" stroke="#3bc583" stroke-width="1.5"/><rect x="1172.8" y="368.6" width="7.5" height="6.3" fill="#3bc583"/><path d="M1187 371.7V451.8" stroke="#3bc583" stroke-width="1.5"/><rect x="1183.2" y="374.9" width="7.5" height="61.6" fill="#3bc583"/><path d="M1197.5 423.3V464.5" stroke="#3bc583" stroke-width="1.5"/><rect x="1193.8" y="436.9" width="7.5" height="7" fill="#3bc583"/><path d="M1208 420.6V441.4M1208 444.4V446" stroke="#e8364f" stroke-width="1.5"/><rect x="1204.2" y="441.4" width="7.5" height="3" fill="#e8364f"/><path d="M1218.5 410V416.5M1218.5 447.1V447.1" stroke="#e8364f" stroke-width="1.5"/><rect x="1215.5" y="417.2" width="6" height="29.1" fill="#000" stroke="#e8364f" stroke-width="1.5"/><path d="M1229 387.6V400M1229 415.5V423.3" stroke="#e8364f" stroke-width="1.5"/><rect x="1226" y="400.8" width="6" height="14" fill="#000" stroke="#e8364f" stroke-width="1.5"/><path d="M1239.5 370.8V388.1M1239.5 398.8V403.5" stroke="#e8364f" stroke-width="1.5"/><rect x="1236.5" y="388.9" width="6" height="9.2" fill="#000" stroke="#e8364f" stroke-width="1.5"/><path d="M1250 356.1V359.3M1250 386.9V395" stroke="#e8364f" stroke-width="1.5"/><rect x="1247" y="360.1" width="6" height="26.1" fill="#000" stroke="#e8364f" stroke-width="1.5"/><path d="M1260.5 342.5V349.3M1260.5 358.5V366.3" stroke="#e8364f" stroke-width="1.5"/><rect x="1257.5" y="350.1" width="6" height="7.7" fill="#000" stroke="#e8364f" stroke-width="1.5"/><path d="M1271 309V323.4M1271 349.3V354.6" stroke="#e8364f" stroke-width="1.5"/><rect x="1268" y="324.1" width="6" height="24.4" fill="#000" stroke="#e8364f" stroke-width="1.5"/><path d="M1281.5 291.4V321.7M1281.5 323.9V339.4" stroke="#e8364f" stroke-width="1.5"/><rect x="1277.8" y="321.7" width="7.5" height="2.2" fill="#e8364f"/><path d="M1292 294.6V308.4M1292 320.7V336.6" stroke="#e8364f" stroke-width="1.5"/><rect x="1289" y="309.1" width="6" height="10.8" fill="#000" stroke="#e8364f" stroke-width="1.5"/><path d="M1302.5 303.3V333.4" stroke="#3bc583" stroke-width="1.5"/><rect x="1298.8" y="307.9" width="7.5" height="18.1" fill="#3bc583"/><path d="M1313 303.3V311.5M1313 325.4V350.4" stroke="#e8364f" stroke-width="1.5"/><rect x="1310" y="312.2" width="6" height="12.4" fill="#000" stroke="#e8364f" stroke-width="1.5"/><path d="M1323.5 282.5V299.9M1323.5 312.2V316.9" stroke="#e8364f" stroke-width="1.5"/><rect x="1320.5" y="300.6" width="6" height="10.8" fill="#000" stroke="#e8364f" stroke-width="1.5"/><path d="M1334 253.8V265M1334 303.7V303.7" stroke="#e8364f" stroke-width="1.5"/><rect x="1331" y="265.8" width="6" height="37.2" fill="#000" stroke="#e8364f" stroke-width="1.5"/><path d="M1344.5 262.7V271.8" stroke="#3bc583" stroke-width="1.5"/><rect x="1340.8" y="265.9" width="7.5" height="5.9" fill="#3bc583"/></g>
<line x1="89" y1="271.2" x2="1386" y2="271.2" stroke="#e8922c" stroke-width="1.7" stroke-dasharray="4.7,4.3"/>
<g transform="translate(-0.25 0) scale(1.5)">
<path d="M63 368.5h4M67 367.5h14M81 366.5h7M88 365.5h21M109 364.5h84M193 363.5h7M200 362.5h14M214 361.5h14M228 360.5h7M235 359.5h14M249 358.5h7M256 357.5h14M270 356.5h7M277 355.5h7M284 354.5h7M291 353.5h7M298 352.5h5M303 351.5h4M307 350.5h3M310 349.5h4M314 348.5h3M317 347.5h4M321 346.5h5M326 345.5h5M331 344.5h4M335 343.5h3M338 342.5h4M342 341.5h5M347 340.5h7M354 339.5h5M359 338.5h4M363 337.5h10M373 336.5h4M377 335.5h12M389 334.5h14M403 333.5h7M410 332.5h7M417 331.5h14M431 330.5h7M438 329.5h7M445 328.5h7M452 327.5h7M459 326.5h7M466 325.5h7M473 324.5h7M480 323.5h5M485 322.5h4M489 321.5h5M494 320.5h7M501 319.5h5M506 318.5h4M510 317.5h5M515 316.5h7M522 315.5h14M536 314.5h7M543 313.5h7M550 312.5h14M564 311.5h21M585 310.5h7M592 309.5h7M599 308.5h7M606 307.5h7M613 306.5h7M620 305.5h14M634 304.5h7M641 303.5h14M655 302.5h7M662 301.5h7M669 300.5h14M683 299.5h7M690 298.5h7M697 297.5h14M711 296.5h7M718 295.5h14M732 294.5h14M746 293.5h7M753 292.5h7M760 291.5h14M774 290.5h7M781 289.5h14M795 288.5h7M802 287.5h7M809 286.5h14M823 285.5h7M830 284.5h14M844 283.5h7M851 282.5h14M865 281.5h14M879 280.5h14M893 279.5h3" fill="none" stroke="#e03030" stroke-width="1"/>
<path d="M63 362.5h4M67 361.5h7M74 360.5h14M88 359.5h7M95 358.5h14M109 357.5h28M137 356.5h77M214 355.5h5M219 354.5h4M223 353.5h5M228 352.5h7M235 351.5h5M240 350.5h4M244 349.5h5M249 348.5h7M256 347.5h5M261 346.5h4M265 345.5h5M270 344.5h5M275 343.5h4M279 342.5h3M282 341.5h2M284 340.5h2M286 339.5h5M291 338.5h5M296 337.5h4M300 336.5h3M303 335.5h4M307 334.5h3M310 333.5h2M312 332.5h2M314 331.5h3M317 330.5h4M321 329.5h3M324 328.5h2M326 327.5h2M328 326.5h3M331 325.5h4M335 324.5h3M338 323.5h2M340 322.5h2M342 321.5h3M345 320.5h2M347 319.5h2M349 318.5h3M352 317.5h2M354 316.5h2M356 315.5h3M359 314.5h2M361 313.5h2M363 312.5h3M366 311.5h2M368 310.5h2M370 309.5h3M373 308.5h4M377 307.5h3M380 306.5h4M384 305.5h3M387 304.5h4M391 303.5h5M396 302.5h5M401 301.5h4M405 300.5h5M410 299.5h7M417 298.5h7M424 297.5h5M429 296.5h4M433 295.5h5M438 294.5h5M443 293.5h4M447 292.5h3M450 291.5h4M454 290.5h3M457 289.5h4M461 288.5h3M464 287.5h4M468 286.5h3M471 285.5h4M475 284.5h3M478 283.5h4M482 282.5h3M485 281.5h4M489 280.5h2M491 279.5h2M493 278.5h2M495 277.5h2M497 276.5h2M499 275.5h2M501 274.5h2M503 273.5h3M506 272.5h4M510 271.5h3M513 270.5h4M517 269.5h5M522 268.5h5M527 267.5h4M531 266.5h5M536 265.5h7M543 264.5h5M548 263.5h4M552 262.5h5M557 261.5h5M562 260.5h4M566 259.5h5M571 258.5h7M578 257.5h5M583 256.5h4M587 255.5h5M592 254.5h5M597 253.5h4M601 252.5h5M606 251.5h5M611 250.5h4M615 249.5h5M620 248.5h7M627 247.5h5M632 246.5h4M636 245.5h3M639 244.5h4M643 243.5h3M646 242.5h2M648 241.5h2M650 240.5h3M653 239.5h4M657 238.5h3M660 237.5h4M664 236.5h3M667 235.5h4M671 234.5h3M674 233.5h4M678 232.5h5M683 231.5h5M688 230.5h4M692 229.5h5M697 228.5h7M704 227.5h7M711 226.5h5M716 225.5h4M720 224.5h5M725 223.5h14M739 222.5h7M746 221.5h7M753 220.5h7M760 219.5h14M774 218.5h7M781 217.5h28M809 216.5h7M816 215.5h7M823 214.5h7M830 213.5h5M835 212.5h4M839 211.5h5M844 210.5h7M851 209.5h7M858 208.5h7M865 207.5h7M872 206.5h7M879 205.5h5M884 204.5h4M888 203.5h5M893 202.5h3" fill="none" stroke="#858585" stroke-width="1"/>
<path d="M63 362.5h4M67 361.5h7M74 360.5h7M81 359.5h14M95 358.5h7M102 357.5h7M109 356.5h7M116 355.5h14M130 354.5h28M158 353.5h5M163 352.5h4M167 351.5h5M172 350.5h7M179 349.5h7M186 348.5h7M193 347.5h5M198 346.5h4M202 345.5h3M205 344.5h4M209 343.5h3M212 342.5h4M216 341.5h5M221 340.5h5M226 339.5h4M230 338.5h5M235 337.5h7M242 336.5h5M247 335.5h4M251 334.5h3M254 333.5h2M256 332.5h2M258 331.5h3M261 330.5h2M263 329.5h2M265 328.5h3M268 327.5h2M270 326.5h2M272 325.5h3M275 324.5h4M279 323.5h3M282 322.5h2M284 321.5h2M286 320.5h2M288 319.5h2M290 318.5h2M292 317.5h2M294 316.5h2M296 315.5h2M298 314.5h2M300 313.5h3M303 312.5h2M305 311.5h2M307 310.5h2M309 309.5h2M311 308.5h2M313 307.5h2M315 306.5h1M316 305.5h2M318 304.5h2M320 303.5h2M322 302.5h1M323 301.5h2M325 300.5h2M327 299.5h2M329 298.5h1M330 297.5h2M332 296.5h1M333 295.5h1M334 294.5h2M336 293.5h1M337 292.5h2M339 291.5h1M340 290.5h1M341 289.5h2M343 288.5h1M344 287.5h2M346 286.5h1M347 285.5h1M348 284.5h2M350 283.5h1M351 282.5h2M353 281.5h2M355 280.5h2M357 279.5h1M358 278.5h2M360 277.5h1M361 276.5h1M362 275.5h2M364 274.5h1M365 273.5h2M367 272.5h2M369 271.5h2M371 270.5h2M373 269.5h2M375 268.5h2M377 267.5h3M380 266.5h2M382 265.5h2M384 264.5h3M387 263.5h4M391 262.5h3M394 261.5h4M398 260.5h3M401 259.5h2M403 258.5h2M405 257.5h3M408 256.5h2M410 255.5h2M412 254.5h3M415 253.5h4M419 252.5h3M422 251.5h4M426 250.5h3M429 249.5h4M433 248.5h3M436 247.5h4M440 246.5h3M443 245.5h4M447 244.5h5M452 243.5h5M457 242.5h4M461 241.5h3M464 240.5h4M468 239.5h3M471 238.5h4M475 237.5h3M478 236.5h2M480 235.5h2M482 234.5h2M484 233.5h2M486 232.5h2M488 231.5h2M490 230.5h2M492 229.5h2M494 228.5h2M496 227.5h2M498 226.5h2M500 225.5h1M501 224.5h1M502 223.5h2M504 222.5h2M506 221.5h2M508 220.5h2M510 219.5h3M513 218.5h4M517 217.5h3M520 216.5h4M524 215.5h3M527 214.5h4M531 213.5h3M534 212.5h4M538 211.5h3M541 210.5h2M543 209.5h2M545 208.5h3M548 207.5h4M552 206.5h3M555 205.5h4M559 204.5h3M562 203.5h4M566 202.5h5M571 201.5h5M576 200.5h4M580 199.5h5M585 198.5h5M590 197.5h4M594 196.5h5M599 195.5h5M604 194.5h4M608 193.5h3M611 192.5h2M613 191.5h2M615 190.5h3M618 189.5h4M622 188.5h3M625 187.5h2M627 186.5h2M629 185.5h5M634 184.5h5M639 183.5h4M643 182.5h5M648 181.5h5M653 180.5h4M657 179.5h5M662 178.5h7M669 177.5h28M697 178.5h12M709 179.5h4M713 180.5h5M718 181.5h5M723 182.5h4M727 183.5h3M730 184.5h4M734 185.5h3M737 186.5h4M741 187.5h3M744 188.5h4M748 189.5h3M751 190.5h2M753 191.5h2M755 192.5h3M758 193.5h4M762 194.5h3M765 195.5h2M767 196.5h2M769 197.5h3M772 198.5h4M776 199.5h3M779 200.5h2M781 201.5h2M783 202.5h3M786 203.5h4M790 204.5h3M793 205.5h4M797 206.5h3M800 207.5h4M804 208.5h5M809 209.5h7M816 210.5h35M851 209.5h45" fill="none" stroke="#1cc81c" stroke-width="1"/>
<path d="M63 350.5h4M67 349.5h7M74 348.5h7M81 347.5h7M88 346.5h14M102 345.5h7M109 344.5h21M130 343.5h14M144 342.5h5M149 341.5h4M153 340.5h5M158 339.5h7M165 338.5h5M170 337.5h4M174 336.5h5M179 335.5h7M186 334.5h5M191 333.5h4M195 332.5h3M198 331.5h2M200 330.5h2M202 329.5h3M205 328.5h2M207 327.5h2M209 326.5h3M212 325.5h2M214 324.5h2M216 323.5h3M219 322.5h4M223 321.5h3M226 320.5h2M228 319.5h2M230 318.5h3M233 317.5h2M235 316.5h2M237 315.5h3M240 314.5h4M244 313.5h3M247 312.5h4M251 311.5h3M254 310.5h2M256 309.5h2M258 308.5h3M261 307.5h2M263 306.5h2M265 305.5h2M267 304.5h2M269 303.5h2M271 302.5h2M273 301.5h1M274 300.5h2M276 299.5h1M277 298.5h1M278 297.5h2M280 296.5h1M281 295.5h2M283 294.5h1M284 293.5h1M285 292.5h2M287 291.5h1M288 290.5h1M289 289.5h1M290 288.5h2M292 287.5h1M293 286.5h1M294 285.5h1M295 284.5h2M297 283.5h1M298 282.5h1M299 281.5h2M301 280.5h1M302 279.5h1M303 278.5h1M304 277.5h1M305 276.5h1M306 275.5h1M307 274.5h1M308 273.5h1M309 272.5h1M310 271.5h1M311 270.5h1M312 269.5h1M313 268.5h1M314 267.5h1M315 266.5h1M316 265.5h1M317 264.5h1M318 263.5h1M319 262.5h1M320 261.5h1M321 260.5h1M322 259.5h1M323 258.5h1M324 257.5h1M325 256.5h1M326 255.5h1M327 254.5h1M328 253.5h1M329 252.5h1M330 251.5h1M331 250.5h1M332 249.5h1M333.5 247v2M334 246.5h1M335 245.5h1M336 244.5h1M337 243.5h1M338.5 241v2M339 240.5h1M340 239.5h1M341.5 237v2M342 236.5h1M343 235.5h1M344.5 233v2M345 232.5h1M346 231.5h1M347.5 229v2M348 228.5h1M349.5 226v2M350 225.5h1M351 224.5h1M352.5 222v2M353 221.5h1M354 220.5h1M355.5 218v2M356 217.5h1M357 216.5h1M358 215.5h1M359 214.5h1M360 213.5h1M361.5 211v2M362 210.5h1M363 209.5h1M364 208.5h1M365 207.5h1M366 206.5h1M367 205.5h2M369 204.5h1M370 203.5h1M371 202.5h1M372 201.5h1M373 200.5h1M374 199.5h2M376 198.5h1M377 197.5h1M378 196.5h1M379 195.5h2M381 194.5h2M383 193.5h2M385 192.5h1M386 191.5h2M388 190.5h1M389 189.5h1M390 188.5h2M392 187.5h2M394 186.5h2M396 185.5h2M398 184.5h3M401 183.5h4M405 182.5h3M408 181.5h2M410 180.5h2M412 179.5h5M417 178.5h5M422 177.5h4M426 176.5h5M431 175.5h7M438 174.5h7M445 173.5h12M457 172.5h4M461 171.5h5M466 170.5h7M473 169.5h7M480 168.5h5M485 167.5h4M489 166.5h3M492 165.5h2M494 164.5h2M496 163.5h3M499 162.5h4M503 161.5h3M506 160.5h4M510 159.5h3M513 160.5h4M517 161.5h3M520 162.5h2M522 163.5h2M524 164.5h3M527 165.5h2M529 166.5h2M531 167.5h3M534 168.5h2M536 169.5h2M538 170.5h2M540 171.5h2M542 172.5h1M543 173.5h1M544 174.5h2M546 175.5h1M547 176.5h2M549 177.5h1M550 178.5h1M551 179.5h2M553 180.5h1M554 181.5h1M555 182.5h1M556 183.5h2M558 184.5h1M559 185.5h1M560 186.5h1M561 187.5h1M562 188.5h1M563 189.5h2M565 190.5h1M566 191.5h1M567 192.5h1M568 193.5h2M570 194.5h2M572 195.5h2M574 196.5h2M576 197.5h4M580 198.5h3M583 199.5h4M587 200.5h3M590 201.5h4M594 202.5h19M613 201.5h5M618 200.5h2M620 199.5h2M622 198.5h3M625 197.5h4M629 196.5h3M632 195.5h2M634 194.5h2M636 193.5h3M639 192.5h2M641 191.5h2M643 190.5h3M646 189.5h2M648 188.5h2M650 187.5h3M653 186.5h4M657 185.5h3M660 184.5h4M664 183.5h17M681 184.5h4M685 185.5h3M688 186.5h4M692 187.5h2M694 188.5h2M696 189.5h2M698 190.5h2M700 191.5h2M702 192.5h4M706 193.5h2M708 194.5h2M710 195.5h2M712 196.5h2M714 197.5h2M716 198.5h2M718 199.5h2M720 200.5h3M723 201.5h2M725 202.5h2M727 203.5h3M730 204.5h2M732 205.5h2M734 206.5h5M739 207.5h7M746 208.5h7M753 209.5h33M786 210.5h4M790 211.5h3M793 212.5h4M797 213.5h3M800 214.5h4M804 215.5h3M807 216.5h4M811 217.5h3M814 218.5h4M818 219.5h5M823 220.5h5M828 221.5h4M832 222.5h3M835 223.5h2M837 224.5h2M839 225.5h3M842 226.5h4M846 227.5h3M849 228.5h4M853 229.5h3M856 230.5h4M860 231.5h3M863 232.5h4M867 233.5h3M870 234.5h4M874 235.5h19M893 234.5h3" fill="none" stroke="#d622d6" stroke-width="1"/>
<path d="M63 327.5h1M64 326.5h2M66 325.5h1M67 324.5h1M68 323.5h2M70 322.5h1M71 321.5h2M73 320.5h2M75 319.5h2M77 318.5h4M81 317.5h7M88 316.5h14M102 317.5h5M107 318.5h4M111 319.5h3M114 320.5h2M116 321.5h2M118 322.5h2M120 323.5h1M121 324.5h1M122 325.5h1M123 326.5h1M124 327.5h1M125 328.5h1M126 329.5h1M127 330.5h2M129 331.5h1M130 332.5h1M131 333.5h2M133 334.5h2M135 335.5h4M139 336.5h3M142 337.5h2M144 338.5h2M146 339.5h5M151 340.5h7M158 339.5h5M163 338.5h4M167 337.5h5M172 336.5h5M177 337.5h4M181 338.5h5M186 337.5h4M190 336.5h2M192 335.5h2M194 334.5h2M196 333.5h1M197 332.5h1M198 331.5h1M199 330.5h1M200 329.5h1M201 328.5h1M202 327.5h1M203 326.5h1M204 325.5h1M205 324.5h1M206 323.5h2M208 322.5h1M209 321.5h1M210 320.5h1M211 319.5h1M212 318.5h1M213 317.5h2M215 316.5h1M216 315.5h1M217 314.5h1M218 313.5h1M219.5 311v2M220 310.5h1M221 309.5h1M222.5 307v2M223 306.5h1M224 305.5h1M225 304.5h2M227 303.5h1M228 302.5h1M229 301.5h2M231 300.5h1M232 299.5h1M233 298.5h1M234 297.5h1M235 296.5h1M236 295.5h1M237 294.5h1M238 293.5h1M239 292.5h1M240 291.5h1M241 290.5h1M242.5 288v2M243 287.5h1M244 286.5h1M245 285.5h1M246.5 283v2M247 282.5h1M248 281.5h1M249.5 279v2M250 278.5h1M251.5 276v2M252 275.5h1M253.5 273v2M254 272.5h1M255.5 270v2M256.5 268v2M257 267.5h1M258.5 265v2M259 264.5h1M260.5 262v2M261.5 260v2M262.5 258v2M263.5 256v2M264.5 254v2M265.5 252v2M266 251.5h1M267.5 249v2M268 248.5h1M269 247.5h1M270.5 245v2M271 244.5h1M272.5 242v2M273 241.5h1M274.5 239v2M275 238.5h1M276.5 236v2M277.5 234v2M278 233.5h1M279.5 231v2M280 230.5h1M281.5 228v2M282.5 226v2M283 225.5h1M284.5 223v2M285.5 221v2M286.5 219v2M287 218.5h1M288 217.5h1M289.5 215v2M290 214.5h1M291 213.5h1M292.5 211v2M293 210.5h1M294 209.5h1M295 208.5h1M296.5 206v2M297 205.5h1M298 204.5h1M299.5 202v2M300 201.5h1M301 200.5h1M302.5 198v2M303 197.5h1M304.5 195v2M305.5 193v2M306 192.5h1M307.5 190v2M308 189.5h1M309.5 187v2M310 186.5h1M311.5 184v2M312.5 182v2M313 181.5h1M314.5 179v2M315 178.5h1M316.5 176v2M317.5 174v2M318 173.5h1M319.5 171v2M320.5 169v2M321.5 167v2M322 166.5h1M323.5 164v2M324.5 162v2M325 161.5h1M326.5 159v2M327.5 157v2M328.5 155v2M329 154.5h1M330 153.5h1M331.5 151v2M332 150.5h1M333 149.5h1M334.5 147v2M335 146.5h1M336 145.5h1M337.5 143v2M338 142.5h1M339.5 140v2M340.5 138v2M341 137.5h1M342.5 135v2M343 134.5h1M344.5 132v2M345 131.5h1M346 130.5h1M347.5 128v2M348 127.5h1M349.5 125v2M350 124.5h1M351 123.5h1M352.5 121v2M353 120.5h1M354 119.5h1M355.5 117v2M356 116.5h1M357 115.5h1M358 114.5h2M360 113.5h1M361 112.5h1M362 111.5h2M364 110.5h1M365 109.5h2M367 108.5h1M368 107.5h1M369 106.5h2M371 105.5h1M372 106.5h2M374 107.5h2M376 108.5h2M378 109.5h1M379 110.5h2M381 111.5h1M382 112.5h1M383 113.5h2M385 114.5h1M386.5 115v2M387 117.5h1M388 118.5h1M389.5 119v2M390 121.5h1M391.5 122v2M392 124.5h1M393.5 125v2M394.5 127v2M395.5 129v2M396.5 131v2M397.5 133v2M398.5 135v2M399 137.5h1M400.5 138v2M401.5 140v2M402 142.5h1M403.5 143v2M404.5 145v2M405.5 147v2M406.5 149v2M407.5 151v2M408.5 153v2M409.5 155v2M410.5 157v3M411.5 160v2M412.5 162v2M413.5 164v3M414.5 167v2M415.5 169v2M416.5 171v2M417.5 173v2M418.5 175v2M419.5 177v2M420.5 179v3M421.5 182v2M422.5 184v2M423.5 186v2M424.5 188v3M425.5 191v2M426.5 193v2M427.5 195v2M428.5 197v2M429.5 199v2M430 201.5h1M431.5 202v2M432.5 204v2M433.5 206v2M434 208.5h1M435 209.5h1M436.5 210v2M437 212.5h1M438 213.5h1M439.5 214v2M440 216.5h1M441 217.5h1M442 218.5h1M443 219.5h1M444 220.5h2M446 221.5h1M447 222.5h1M448 223.5h1M449 224.5h2M451 225.5h2M453 226.5h2M455 227.5h2M457 226.5h4M461 225.5h2M463 224.5h2M465 223.5h1M466 222.5h1M467 221.5h2M469 220.5h1M470 219.5h1M471 218.5h1M472 217.5h2M474 216.5h1M475 215.5h1M476 214.5h1M477 213.5h1M478 212.5h1M479 211.5h1M480.5 209v2M481 208.5h1M482 207.5h1M483 206.5h1M484.5 204v2M485 203.5h1M486.5 201v2M487.5 199v2M488 198.5h1M489.5 196v2M490 195.5h1M491.5 193v2M492.5 191v2M493.5 189v2M494.5 187v2M495.5 185v2M496.5 183v2M497.5 180v3M498.5 178v2M499.5 176v2M500.5 174v2M501.5 172v2M502.5 170v2M503.5 168v2M504.5 166v2M505.5 164v2M506 163.5h1M507.5 161v2M508.5 159v2M509 158.5h1M510.5 156v2M511 155.5h2M513 154.5h2M515 153.5h2M517 152.5h3M520 151.5h2M522 150.5h2M524 149.5h5M529 150.5h5M534 151.5h2M536 152.5h2M538 153.5h2M540 154.5h1M541 155.5h1M542 156.5h2M544 157.5h1M545 158.5h1M546 159.5h1M547 160.5h1M548 161.5h1M549 162.5h1M550 163.5h1M551 164.5h1M552 165.5h1M553 166.5h1M554.5 167v2M555 169.5h1M556 170.5h1M557.5 171v2M558 173.5h1M559.5 174v2M560.5 176v2M561.5 178v2M562.5 180v2M563.5 182v2M564.5 184v2M565.5 186v2M566.5 188v2M567.5 190v3M568.5 193v2M569.5 195v2M570.5 197v2M571.5 199v3M572.5 202v2M573.5 204v2M574.5 206v2M575.5 208v2M576.5 210v2M577.5 212v2M578.5 214v2M579.5 216v2M580.5 218v2M581.5 220v2M582 222.5h2M584 223.5h2M586 224.5h2M588 225.5h1M589 226.5h2M591 227.5h2M593 228.5h2M595 229.5h2M597 230.5h4M601 231.5h5M606 230.5h4M610 229.5h2M612 228.5h2M614 227.5h2M616 226.5h1M617 225.5h2M619 224.5h2M621 223.5h2M623 222.5h1M624 221.5h1M625 220.5h1M626 219.5h2M628 218.5h1M629 217.5h1M630 216.5h1M631.5 214v2M632 213.5h1M633 212.5h1M634.5 210v2M635 209.5h1M636.5 207v2M637 206.5h1M638 205.5h1M639.5 203v2M640 202.5h1M641 201.5h1M642.5 199v2M643 198.5h1M644 197.5h1M645 196.5h1M646 195.5h1M647 194.5h1M648.5 192v2M649 191.5h1M650 190.5h1M651 189.5h1M652.5 187v2M653 186.5h1M654.5 184v2M655.5 182v2M656 181.5h1M657.5 179v2M658 178.5h1M659 177.5h2M661 176.5h1M662 175.5h1M663 174.5h2M665 173.5h1M666 172.5h1M667 171.5h1M668 170.5h2M670 169.5h1M671 168.5h1M672 167.5h16M688 168.5h4M692 169.5h2M694 170.5h1M695 171.5h1M696 172.5h2M698 173.5h1M699 174.5h1M700 175.5h1M701 176.5h1M702 177.5h1M703 178.5h2M705 179.5h1M706 180.5h1M707 181.5h1M708 182.5h1M709 183.5h1M710 184.5h1M711 185.5h1M712 186.5h1M713 187.5h1M714 188.5h1M715 189.5h1M716 190.5h1M717 191.5h1M718 192.5h1M719 193.5h1M720 194.5h1M721 195.5h1M722.5 196v2M723 198.5h1M724 199.5h1M725.5 200v2M726 202.5h1M727.5 203v2M728 205.5h1M729 206.5h1M730.5 207v2M731 209.5h1M732 210.5h1M733.5 211v2M734 213.5h1M735 214.5h1M736.5 215v2M737 217.5h1M738 218.5h1M739.5 219v2M740 221.5h1M741.5 222v2M742 224.5h1M743 225.5h2M745 226.5h2M747 227.5h2M749 228.5h1M750 229.5h2M752 230.5h2M754 231.5h2M756 232.5h1M757 233.5h2M759 234.5h2M761 235.5h2M763 236.5h9M772 237.5h2M774 238.5h2M776 239.5h3M779 240.5h2M781 241.5h2M783 242.5h2M785 243.5h1M786 244.5h1M787 245.5h2M789 246.5h1M790 247.5h1M791 248.5h1M792 249.5h2M794 250.5h1M795 251.5h1M796 252.5h2M798 253.5h1M799 254.5h2M801 255.5h2M803 256.5h2M805 257.5h4M809 258.5h5M814 259.5h2M816 260.5h2M818 261.5h3M821 262.5h2M823 263.5h2M825 264.5h5M830 263.5h7M837 264.5h5M842 263.5h2M844 262.5h2M846 261.5h2M848 260.5h2M850 259.5h2M852 258.5h2M854 257.5h1M855 256.5h1M856.5 254v2M857 253.5h1M858 252.5h1M859.5 250v2M860 249.5h1M861 248.5h1M862 247.5h1M863 246.5h1M864 245.5h1M865 244.5h1M866 243.5h1M867 242.5h1M868 241.5h1M869 240.5h1M870.5 238v2M871 237.5h1M872 236.5h1M873.5 234v2M874 233.5h1M875 232.5h1M876 231.5h1M877 230.5h1M878 229.5h1M879.5 227v2M880 226.5h1M881 225.5h1M882 224.5h1M883 223.5h1M884.5 221v2M885 220.5h1M886 219.5h1M887.5 217v2M888 216.5h1M889 215.5h1M890 214.5h1M891 213.5h1M892 212.5h1M893 211.5h1M894 210.5h1M895 209.5h1" fill="none" stroke="#cfcf1e" stroke-width="1"/>
<path d="M63 304.5h2M65 305.5h4M69 306.5h2M71 307.5h2M73 308.5h2M75 309.5h2M77 310.5h1M78 311.5h2M80 312.5h1M81 313.5h1M82 314.5h2M84 315.5h1M85 316.5h1M86.5 317v2M87 319.5h1M88 320.5h1M89.5 321v2M90 323.5h1M91 324.5h1M92 325.5h2M94 326.5h2M96 327.5h2M98 328.5h4M102 329.5h7M109 328.5h7M116 329.5h4M120 330.5h1M121 331.5h1M122 332.5h2M124 333.5h1M125 334.5h1M126 335.5h1M127 336.5h2M129 337.5h1M130 338.5h1M131 339.5h2M133 340.5h1M134 341.5h2M136 342.5h2M138 343.5h2M140 344.5h1M141 345.5h2M143 346.5h1M144 347.5h1M145 348.5h2M147 349.5h4M151 350.5h4M155 349.5h1M156 348.5h1M157 347.5h1M158 346.5h1M159 345.5h1M160 344.5h1M161 343.5h1M162 342.5h1M163.5 340v2M164 339.5h1M165 338.5h1M166.5 336v2M167 335.5h1M168 334.5h1M169 333.5h2M171 332.5h1M172 331.5h1M173 330.5h2M175 329.5h2M177 328.5h2M179 327.5h2M181 326.5h3M184 325.5h2M186 324.5h2M188 323.5h9M197 322.5h2M199 321.5h1M200 320.5h1M201 319.5h2M203 318.5h1M204 317.5h1M205 316.5h1M206 315.5h2M208 314.5h1M209 313.5h1M210 312.5h1M211.5 310v2M212 309.5h1M213.5 307v2M214.5 305v2M215 304.5h1M216.5 302v2M217 301.5h1M218.5 299v2M219.5 297v2M220.5 295v2M221.5 293v2M222.5 291v2M223.5 289v2M224.5 287v2M225.5 285v2M226 284.5h1M227 283.5h1M228.5 281v2M229 280.5h1M230.5 278v2M231 277.5h1M232 276.5h1M233 275.5h1M234 274.5h1M235.5 272v2M236 271.5h1M237 270.5h1M238 269.5h1M239.5 267v2M240 266.5h1M241.5 264v2M242.5 262v2M243 261.5h1M244.5 259v2M245 258.5h1M246.5 256v2M247 255.5h1M248 254.5h1M249.5 252v2M250 251.5h1M251.5 249v2M252 248.5h1M253 247.5h1M254 246.5h1M255 245.5h1M256 244.5h1M257 243.5h1M258 242.5h1M259.5 240v2M260.5 238v2M261.5 236v2M262.5 234v2M263.5 232v2M264.5 230v2M265.5 228v2M266.5 226v2M267.5 224v2M268.5 222v2M269.5 220v2M270.5 218v2M271.5 216v2M272.5 214v2M273 213.5h1M274.5 211v2M275.5 209v2M276 208.5h1M277.5 206v2M278.5 204v2M279.5 202v2M280 201.5h1M281.5 199v2M282.5 197v2M283.5 195v2M284.5 193v2M285.5 191v2M286.5 189v2M287 188.5h1M288.5 186v2M289 185.5h1M290.5 183v2M291.5 181v2M292 180.5h1M293.5 178v2M294 177.5h2M296 176.5h4M300 175.5h2M302.5 173v2M303 172.5h1M304 171.5h1M305.5 169v2M306 168.5h1M307.5 166v2M308 165.5h1M309.5 163v2M310 162.5h1M311.5 160v2M312.5 158v2M313 157.5h1M314.5 155v2M315 154.5h1M316.5 152v2M317 151.5h1M318.5 149v2M319.5 147v2M320 146.5h1M321.5 144v2M322 143.5h1M323.5 141v2M324.5 139v2M325 138.5h1M326.5 136v2M327.5 134v2M328.5 132v2M329.5 130v2M330.5 128v2M331.5 126v2M332.5 124v2M333.5 122v2M334.5 120v2M335.5 118v2M336.5 116v2M337.5 114v2M338.5 112v2M339.5 110v2M340.5 108v2M341.5 106v2M342.5 104v2M343 103.5h1M344 102.5h1M345.5 100v2M346 99.5h1M347 98.5h1M348.5 96v2M349 95.5h1M350 94.5h1M351 93.5h1M352 92.5h1M353 91.5h2M355 90.5h1M356 89.5h1M357 88.5h4M361 89.5h4M365 90.5h2M367 91.5h1M368 92.5h1M369 93.5h2M371.5 94v2M372.5 96v3M373.5 99v3M374.5 102v3M375.5 105v3M376.5 108v3M377.5 111v3M378.5 114v3M379.5 117v3M380.5 120v2M381.5 122v3M382.5 125v3M383.5 128v2M384.5 130v3M385.5 133v3M386.5 136v4M387.5 140v4M388.5 144v4M389.5 148v4M390.5 152v4M391.5 156v4M392.5 160v3M393.5 163v4M394.5 167v3M395.5 170v3M396.5 173v4M397.5 177v3M398.5 180v4M399.5 184v3M400.5 187v3M401.5 190v2M402.5 192v3M403.5 195v3M404.5 198v2M405.5 200v3M406.5 203v2M407.5 205v2M408 207.5h1M409 208.5h1M410.5 209v2M411 211.5h1M412.5 212v2M413 214.5h1M414.5 215v2M415.5 217v2M416.5 219v2M417.5 221v2M418.5 223v2M419.5 225v2M420 227.5h1M421 228.5h2M423 229.5h1M424 230.5h1M425 231.5h2M427 232.5h9M436 231.5h4M440 230.5h5M445 231.5h4M449 230.5h2M451 229.5h2M453 228.5h2M455 227.5h1M456.5 225v2M457 224.5h1M458 223.5h1M459.5 221v2M460 220.5h1M461.5 218v2M462 217.5h1M463 216.5h1M464.5 214v2M465 213.5h1M466 212.5h1M467.5 210v2M468 209.5h1M469 208.5h1M470.5 206v2M471 205.5h1M472.5 203v2M473.5 201v2M474 200.5h1M475.5 198v2M476.5 196v2M477.5 194v2M478.5 192v2M479.5 190v2M480.5 187v3M481.5 185v2M482.5 183v2M483.5 180v3M484.5 178v2M485.5 175v3M486.5 173v2M487.5 170v3M488.5 167v3M489.5 165v2M490.5 162v3M491.5 159v3M492.5 157v2M493.5 154v3M494.5 151v3M495.5 149v2M496.5 146v3M497.5 143v3M498.5 140v3M499.5 137v3M500.5 135v2M501.5 132v3M502.5 129v3M503.5 126v3M504.5 124v2M505.5 122v2M506 121.5h1M507.5 119v2M508.5 117v2M509 116.5h1M510.5 114v2M511 113.5h1M512.5 114v2M513 116.5h1M514 117.5h1M515.5 118v2M516 120.5h1M517.5 121v2M518 123.5h1M519.5 124v2M520.5 126v2M521 128.5h1M522.5 129v2M523.5 131v2M524.5 133v2M525.5 135v2M526.5 137v3M527.5 140v3M528.5 143v3M529.5 146v3M530.5 149v3M531.5 152v3M532.5 155v3M533.5 158v4M534.5 162v4M535.5 166v3M536.5 169v4M537.5 173v4M538.5 177v4M539.5 181v3M540.5 184v3M541.5 187v4M542.5 191v3M543.5 194v3M544.5 197v4M545.5 201v3M546.5 204v2M547 206.5h2M549 207.5h2M551 208.5h2M553 209.5h1M554 210.5h1M555.5 211v2M556 213.5h1M557 214.5h1M558.5 215v2M559 217.5h1M560 218.5h1M561 219.5h1M562 220.5h1M563 221.5h1M564.5 222v2M565 224.5h1M566 225.5h1M567 226.5h1M568 227.5h1M569 228.5h1M570 229.5h2M572 230.5h1M573 231.5h1M574 232.5h1M575 233.5h2M577 234.5h2M579 235.5h2M581 236.5h1M582 237.5h2M584 238.5h1M585 239.5h1M586 240.5h2M588 241.5h2M590 240.5h4M594 239.5h3M597 238.5h2M599 237.5h2M601 236.5h2M603 235.5h1M604 234.5h1M605 233.5h1M606.5 231v2M607 230.5h1M608 229.5h1M609 228.5h1M610.5 226v2M611 225.5h1M612.5 223v2M613.5 221v2M614 220.5h1M615.5 218v2M616 217.5h1M617.5 215v2M618.5 213v2M619.5 211v2M620.5 209v2M621.5 207v2M622.5 205v2M623.5 203v2M624.5 201v2M625 200.5h1M626.5 198v2M627.5 196v2M628 195.5h1M629.5 193v2M630.5 191v2M631.5 189v2M632.5 187v2M633.5 185v2M634.5 182v3M635.5 180v2M636.5 178v2M637.5 176v2M638.5 174v2M639 173.5h1M640 172.5h1M641.5 170v2M642 169.5h1M643.5 167v2M644 166.5h1M645 165.5h2M647 164.5h1M648 163.5h1M649 162.5h2M651 161.5h1M652 160.5h1M653 159.5h1M654 158.5h1M655.5 156v2M656 155.5h1M657 154.5h1M658 153.5h8M666 154.5h2M668 155.5h2M670 156.5h2M672 157.5h1M673.5 158v2M674 160.5h1M675 161.5h1M676.5 162v2M677 164.5h1M678.5 165v2M679 167.5h1M680 168.5h2M682 169.5h1M683 170.5h1M684 171.5h2M686 172.5h1M687.5 173v2M688.5 175v2M689.5 177v2M690.5 179v2M691.5 181v2M692.5 183v2M693 185.5h1M694.5 186v2M695 188.5h1M696.5 189v2M697.5 191v2M698 193.5h1M699.5 194v2M700 196.5h1M701 197.5h1M702.5 198v2M703 200.5h1M704 201.5h1M705.5 202v2M706 204.5h1M707 205.5h1M708 206.5h2M710 207.5h2M712 208.5h2M714 209.5h1M715 210.5h1M716 211.5h1M717 212.5h1M718.5 213v2M719 215.5h1M720 216.5h1M721 217.5h1M722 218.5h1M723.5 219v2M724 221.5h1M725 222.5h1M726.5 223v2M727 225.5h1M728 226.5h1M729 227.5h1M730 228.5h1M731 229.5h1M732 230.5h1M733 231.5h1M734 232.5h1M735 233.5h1M736.5 234v2M737 236.5h1M738 237.5h1M739.5 238v2M740 240.5h1M741.5 241v2M742 243.5h1M743 244.5h2M745 245.5h2M747 246.5h2M749 247.5h4M753 246.5h11M764 245.5h1M765 244.5h1M766 243.5h1M767 242.5h1M768 241.5h1M769 240.5h1M770 239.5h1M771 238.5h2M773 237.5h2M775 236.5h2M777 235.5h2M779 236.5h4M783 237.5h2M785.5 238v2M786.5 240v2M787.5 242v2M788.5 244v2M789.5 246v2M790.5 248v2M791 250.5h1M792.5 251v2M793 253.5h1M794 254.5h1M795.5 255v2M796 257.5h1M797.5 258v2M798.5 260v2M799.5 262v2M800.5 264v2M801.5 266v2M802.5 268v2M803.5 270v2M804.5 272v2M805.5 274v2M806 276.5h1M807 277.5h1M808 278.5h2M810 279.5h1M811 280.5h1M812 281.5h2M814 282.5h2M816 283.5h2M818 284.5h2M820 283.5h1M821 282.5h1M822 281.5h1M823 280.5h1M824 279.5h1M825 278.5h1M826 277.5h1M827.5 275v2M828 274.5h1M829.5 272v2M830.5 270v2M831 269.5h1M832.5 267v2M833 266.5h1M834.5 264v2M835.5 262v2M836.5 260v2M837.5 258v2M838.5 256v2M839.5 254v2M840 253.5h1M841.5 251v2M842.5 249v2M843 248.5h1M844.5 246v2M845.5 244v2M846.5 242v2M847 241.5h1M848.5 239v2M849 238.5h1M850.5 236v2M851.5 234v2M852 233.5h1M853.5 231v2M854 230.5h1M855.5 228v2M856 227.5h1M857 226.5h1M858.5 224v2M859 223.5h1M860.5 221v2M861 220.5h1M862 219.5h2M864 218.5h2M866 217.5h2M868 216.5h1M869 215.5h2M871 214.5h1M872 213.5h1M873 212.5h2M875 211.5h1M876 210.5h2M878 209.5h2M880 208.5h2M882 207.5h1M883 206.5h1M884 205.5h1M885 204.5h1M886 203.5h1M887 202.5h1M888 201.5h1M889 200.5h1M890 199.5h2M892 198.5h1M893 197.5h1M894 196.5h2" fill="none" stroke="#e6e6e6" stroke-width="1"/>
</g>
<path d="M532 94.1H542.5M536 90.6V97.7" stroke="#f0f0f0" stroke-width="1.3"/>
<text x="544" y="89.3" font-size="18" fill="#e8364f" text-anchor="start" font-weight="bold" textLength="55" lengthAdjust="spacingAndGlyphs">1.0063</text>
<path d="M196.3 557.6H206.3M200 555V560" stroke="#f0f0f0" stroke-width="1.3"/>
<text x="207" y="574.6" font-size="18" fill="#3bc583" text-anchor="start" font-weight="bold" textLength="56" lengthAdjust="spacingAndGlyphs">0.9194</text>
<path d="M1194 464.6H1204M1197.5 462V467" stroke="#f0f0f0" stroke-width="1.3"/>
<text x="1205.5" y="481.5" font-size="18" fill="#3bc583" text-anchor="start" font-weight="bold" textLength="56" lengthAdjust="spacingAndGlyphs">0.9370</text>
<circle cx="107" cy="50" r="2.6" fill="#1f82d8"/><circle cx="359.5" cy="50" r="2.6" fill="#1f82d8"/>
<rect x="1387" y="271.1" width="100" height="25.6" fill="#000" stroke="#e08a2c" stroke-width="2"/>
<text x="1391" y="290.1" font-size="18.8" fill="#e8962e" text-anchor="start" font-weight="normal" textLength="54" lengthAdjust="spacingAndGlyphs">0.9731</text>
<path d="M1475.3 271L1479 261.5V271Z" fill="#e08a2c"/>
<g transform="translate(-0.25 0) scale(1.5)">
<path d="M63 480.5h1M64 481.5h1M65 482.5h1M66 483.5h2M68 484.5h1M69 485.5h1M70 486.5h2M72 485.5h4M76 484.5h5M81 485.5h5M86 486.5h4M90 487.5h5M95 488.5h7M102 487.5h4M106 486.5h2M108 485.5h2M110 484.5h2M112 483.5h1M113 484.5h2M115 485.5h1M116 486.5h1M117 487.5h2M119 488.5h1M120 489.5h1M121 490.5h1M122 491.5h1M123.5 492v2M124 494.5h1M125 495.5h1M126 496.5h4M130 497.5h4M134 496.5h2M136 495.5h2M138 494.5h2M140 493.5h4M144 492.5h5M149 491.5h2M151 490.5h2M153 489.5h2M155 488.5h2M157 487.5h1M158 486.5h1M159 485.5h2M161 484.5h15M176 485.5h2M178 486.5h2M180 487.5h2M182 488.5h2M184 487.5h4M188 486.5h5M193 485.5h4M197 484.5h1M198.5 482v2M199 481.5h1M200 480.5h1M201.5 478v2M202 477.5h1M203 476.5h4M207 475.5h5M212 474.5h4M216 473.5h2M218 472.5h1M219 471.5h1M220 470.5h1M221 469.5h1M222 468.5h1M223 467.5h1M224 466.5h1M225 467.5h2M227 468.5h1M228 469.5h1M229 470.5h2M231 471.5h1M232 470.5h2M234 469.5h2M236 468.5h2M238 467.5h2M240 466.5h4M244 465.5h3M247 464.5h4M251 463.5h3M254 462.5h4M258 461.5h2M260 460.5h2M262 459.5h1M263 458.5h1M264 457.5h2M266 456.5h2M268 455.5h4M272 454.5h10M282 453.5h2M284 452.5h2M286 451.5h5M291 450.5h4M295.5 451v2M296 453.5h1M297.5 454v2M298.5 456v2M299 458.5h1M300.5 459v2M301 461.5h1M302 460.5h1M303 459.5h1M304 458.5h1M305.5 456v2M306 455.5h1M307 454.5h1M308 453.5h2M310 452.5h4M314 451.5h3M317 450.5h4M321 449.5h5M326 448.5h5M331 449.5h4M335 450.5h2M337 449.5h2M339 448.5h2M341 447.5h2M343 446.5h4M347 447.5h11M358.5 448v2M359.5 450v2M360 452.5h1M361.5 453v2M362.5 455v2M363.5 457v2M364 459.5h1M365 460.5h1M366 461.5h1M367 462.5h1M368 463.5h1M369 464.5h1M370 465.5h1M371.5 466v2M372.5 468v2M373.5 470v2M374.5 472v2M375.5 474v3M376.5 477v2M377.5 479v2M378.5 481v2M379 482.5h3M382 481.5h4M386 482.5h1M387.5 483v2M388 485.5h1M389 486.5h1M390.5 487v2M391 489.5h1M392 490.5h1M393 491.5h2M395 492.5h1M396 493.5h1M397 494.5h2M399 495.5h2M401 494.5h4M405 493.5h5M410 494.5h5M415 495.5h4M419 496.5h10M429 495.5h4M433 494.5h2M435 493.5h2M437 492.5h2M439 491.5h2M441 490.5h1M442 491.5h2M444 492.5h1M445 493.5h1M446 494.5h2M448 495.5h1M449 494.5h2M451 493.5h2M453 492.5h2M455 491.5h1M456 490.5h1M457 489.5h1M458 488.5h1M459 487.5h1M460 486.5h1M461 485.5h1M462 484.5h4M466 483.5h4M470 482.5h2M472 481.5h1M473 480.5h1M474 479.5h2M476 478.5h4M480 477.5h4M484 476.5h2M486 475.5h1M487 474.5h1M488 473.5h2M490 472.5h1M491 471.5h1M492 470.5h1M493 469.5h2M495 468.5h1M496 467.5h1M497 466.5h2M499 465.5h4M503 464.5h2M505 465.5h1M506 466.5h1M507 467.5h1M508 468.5h1M509 469.5h1M510 470.5h1M511.5 471v2M512.5 473v3M513.5 476v3M514.5 479v3M515.5 482v4M516.5 486v3M517.5 489v3M518.5 492v2M519 493.5h1M520 492.5h2M522 491.5h2M524 490.5h3M527 491.5h2M529 492.5h2M531 493.5h10M541 494.5h2M543 495.5h2M545 496.5h10M555 497.5h4M559 498.5h3M562 499.5h4M566 500.5h5M571 499.5h7M578 500.5h11M589 499.5h2M591 498.5h2M593 497.5h2M595 496.5h4M599 495.5h4M603 494.5h1M604 493.5h1M605 492.5h2M607 491.5h1M608 490.5h1M609 489.5h2M611 488.5h4M615 487.5h3M618 486.5h4M622 485.5h3M625 484.5h4M629 483.5h2M631 482.5h2M633 481.5h1M634 480.5h1M635 479.5h2M637 478.5h4M641 479.5h5M646 480.5h2M648 481.5h2M650 482.5h2M652 481.5h2M654 480.5h2M656 479.5h2M658 478.5h1M659 479.5h1M660 480.5h1M661 481.5h1M662 482.5h1M663 483.5h1M664 484.5h1M665 485.5h8M673 486.5h1M674 487.5h1M675 488.5h1M676 489.5h1M677 490.5h1M678 491.5h1M679 492.5h2M681 491.5h4M685 490.5h2M687 491.5h2M689 492.5h2M691 493.5h2M693 494.5h1M694 495.5h2M696 496.5h2M698 497.5h2M700 498.5h2M702 497.5h2M704 496.5h2M706 495.5h5M711 496.5h5M716 497.5h2M718 498.5h2M720 499.5h2M722 500.5h2M724 501.5h2M726 502.5h2M728 503.5h2M730 504.5h4M734 505.5h5M739 506.5h4M743 505.5h1M744 504.5h1M745 503.5h1M746 502.5h1M747 501.5h1M748 500.5h1M749 499.5h2M751 498.5h2M753 497.5h2M755 496.5h2M757 497.5h2M759 498.5h2M761 499.5h2M763 500.5h1M764 499.5h1M765 498.5h1M766 497.5h2M768 496.5h1M769 495.5h1M770 494.5h1M771 495.5h2M773 496.5h1M774 497.5h1M775 498.5h2M777 499.5h4M781 500.5h4M785 501.5h1M786 502.5h1M787 503.5h1M788.5 504v2M789 506.5h1M790 507.5h1M791 508.5h4M795 509.5h7M802 508.5h4M806 507.5h2M808 506.5h2M810 505.5h2M812 504.5h2M814 503.5h2M816 502.5h2M818 501.5h3M821 500.5h4M825 499.5h2M827 498.5h2M829 497.5h1M830 496.5h1M831 495.5h2M833 494.5h2M835 493.5h4M839 492.5h2M841 491.5h2M843 490.5h2M845 489.5h2M847 488.5h9M856 487.5h4M860 486.5h3M863 487.5h2M865 488.5h2M867 489.5h3M870 488.5h4M874 487.5h3M877 486.5h4M881 485.5h2M883 484.5h1M884 483.5h1M885 482.5h2M887 481.5h1M888 480.5h1M889 479.5h2M891 480.5h4M895 481.5h1" fill="none" stroke="#d622d6" stroke-width="1"/>
<path d="M63 471.5h1M64.5 472v2M65.5 474v2M66.5 476v2M67.5 478v2M68.5 480v2M69.5 482v2M70.5 484v2M71 484.5h2M73 483.5h2M75 482.5h2M77 481.5h2M79 482.5h4M83 483.5h2M85 484.5h1M86 485.5h1M87 486.5h1M88 487.5h1M89 488.5h1M90 489.5h1M91 490.5h15M106.5 488v2M107 487.5h1M108.5 485v2M109.5 483v2M110 482.5h1M111.5 480v2M112 479.5h1M113.5 480v2M114 482.5h1M115.5 483v2M116.5 485v2M117 487.5h1M118.5 488v2M119.5 490v2M120.5 492v2M121.5 494v3M122.5 497v2M123.5 499v3M124.5 502v3M125.5 505v2M126.5 507v2M127 508.5h3M130 509.5h4M134 508.5h1M135.5 506v2M136 505.5h1M137 504.5h1M138.5 502v2M139 501.5h1M140 500.5h2M142 499.5h4M146 498.5h2M148 497.5h1M149 496.5h1M150 495.5h1M151.5 493v2M152 492.5h1M153 491.5h1M154 490.5h1M155.5 488v2M156 487.5h1M157 486.5h1M158.5 484v2M159 483.5h1M160.5 481v2M161 480.5h2M163 479.5h4M167 478.5h5M172 479.5h4M176.5 480v2M177 482.5h1M178.5 483v2M179.5 485v2M180 487.5h1M181.5 488v2M182 490.5h1M183 489.5h1M184 488.5h1M185 487.5h1M186 486.5h1M187 485.5h1M188 484.5h1M189 483.5h4M193 482.5h4M196 481.5h1M197.5 478v3M198.5 476v2M199.5 473v3M200.5 470v3M201.5 468v2M202.5 465v3M203.5 463v2M204 463.5h7M211 462.5h2M213 461.5h1M214 460.5h1M215 459.5h2M217 458.5h1M218.5 456v2M219 455.5h1M220 454.5h1M221.5 452v2M222 451.5h1M223.5 449v2M224 448.5h1M225.5 449v2M226.5 451v2M227 453.5h1M228.5 454v2M229.5 456v2M230.5 458v2M231 460.5h1M232 459.5h1M233 458.5h1M234 457.5h2M236 456.5h1M237 455.5h1M238 454.5h1M239 453.5h2M241 452.5h2M243 451.5h2M245 450.5h2M247 449.5h2M249 448.5h2M251 447.5h3M254 446.5h2M256 445.5h2M258 444.5h2M260 443.5h1M261 442.5h1M262 441.5h2M264 440.5h1M265 439.5h1M266 438.5h2M268 437.5h4M272 436.5h5M277 435.5h5M282 434.5h2M284 433.5h2M286 432.5h5M291 431.5h4M294 432.5h1M295.5 433v3M296.5 436v4M297.5 440v3M298.5 443v3M299.5 446v4M300.5 450v3M301.5 453v2M302.5 452v2M303.5 450v2M304 449.5h1M305.5 447v2M306.5 445v2M307.5 443v2M308 442.5h2M310 441.5h4M314 440.5h3M317 439.5h2M319 438.5h2M321 437.5h5M326 436.5h5M331 437.5h2M333 438.5h2M335 439.5h2M337 438.5h2M339 437.5h1M340 436.5h1M341 435.5h2M343 434.5h2M345 435.5h4M349 436.5h9M357 437.5h1M358.5 438v4M359.5 442v3M360.5 445v4M361.5 449v4M362.5 453v3M363.5 456v4M364.5 460v2M365.5 462v2M366.5 464v2M367 466.5h1M368.5 467v2M369.5 469v2M370.5 471v2M371.5 473v2M372.5 475v4M373.5 479v4M374.5 483v3M375.5 486v4M376.5 490v4M377.5 494v4M378.5 498v2M379 499.5h1M380 498.5h2M382 497.5h2M384 496.5h2M386.5 497v2M387.5 499v2M388 501.5h1M389.5 502v2M390.5 504v2M391.5 506v2M392 508.5h1M393 509.5h1M394 510.5h1M395 511.5h1M396 512.5h1M397 513.5h1M398 514.5h1M399 515.5h1M400 514.5h2M402 513.5h2M404 512.5h2M406 511.5h2M408 512.5h4M412 513.5h3M415 514.5h4M419 515.5h5M424 516.5h4M428 515.5h2M430 514.5h1M431 513.5h1M432 512.5h2M434 511.5h1M435 510.5h1M436.5 508v2M437 507.5h1M438 506.5h1M439.5 504v2M440 503.5h1M441 502.5h1M442 503.5h1M443 504.5h1M444 505.5h1M445.5 506v2M446 508.5h1M447 509.5h1M448 510.5h1M449.5 508v2M450 507.5h1M451 506.5h1M452.5 504v2M453 503.5h1M454.5 501v2M455 500.5h1M456.5 498v2M457.5 496v2M458.5 494v2M459.5 492v2M460.5 490v2M461.5 488v2M462.5 486v2M463 486.5h1M464 485.5h2M466 484.5h2M468 483.5h2M470 482.5h1M471 481.5h1M472 480.5h1M473.5 478v2M474 477.5h1M475 476.5h1M476 475.5h2M478 474.5h4M482 473.5h2M484 472.5h1M485.5 470v2M486 469.5h1M487 468.5h1M488.5 466v2M489 465.5h1M490 464.5h1M491 463.5h1M492.5 461v2M493 460.5h1M494 459.5h1M495.5 457v2M496 456.5h1M497 455.5h1M498 454.5h2M500 453.5h2M502 452.5h2M504.5 451v2M505.5 453v2M506.5 455v2M507.5 457v2M508.5 459v2M509.5 461v2M510.5 463v2M511.5 465v4M512.5 469v5M513.5 474v5M514.5 479v5M515.5 484v6M516.5 490v5M517.5 495v5M518.5 500v3M519 501.5h2M521 500.5h1M522 499.5h1M523 498.5h2M525 497.5h1M526 498.5h2M528 499.5h2M530 500.5h2M532 501.5h4M536 502.5h4M540 503.5h2M542 504.5h1M543 505.5h1M544 506.5h2M546 507.5h4M550 506.5h4M554 507.5h2M556 508.5h2M558 509.5h2M560 510.5h2M562 511.5h2M564 512.5h2M566 513.5h3M569 512.5h2M571 511.5h2M573 510.5h3M576 511.5h2M578 512.5h2M580 513.5h9M589.5 511v2M590 510.5h1M591 509.5h1M592.5 507v2M593 506.5h1M594.5 504v2M595 503.5h2M597 502.5h4M601 501.5h2M603.5 499v2M604.5 497v2M605.5 495v2M606.5 493v2M607.5 491v2M608.5 489v2M609.5 487v2M610 487.5h1M611 486.5h2M613 485.5h2M615 484.5h2M617 483.5h1M618 482.5h1M619 481.5h2M621 480.5h1M622 479.5h1M623 478.5h2M625 477.5h2M627 476.5h2M629 475.5h2M631.5 473v2M632 472.5h1M633 471.5h1M634.5 469v2M635 468.5h1M636.5 466v2M637 465.5h2M639 466.5h2M641 467.5h2M643 468.5h2M645 469.5h1M646 470.5h1M647 471.5h1M648 472.5h1M649 473.5h1M650 474.5h1M651 475.5h1M652 474.5h1M653 473.5h1M654 472.5h1M655 471.5h1M656 470.5h1M657 469.5h1M658.5 468v2M659.5 470v2M660.5 472v2M661.5 474v2M662.5 476v3M663.5 479v2M664.5 481v2M665.5 483v2M666 484.5h1M667 483.5h4M671 482.5h2M672 483.5h1M673.5 484v2M674.5 486v2M675.5 488v2M676.5 490v3M677.5 493v2M678.5 495v2M679.5 497v2M680 497.5h2M682 496.5h2M684 495.5h2M686 494.5h1M687 495.5h1M688 496.5h1M689 497.5h2M691 498.5h1M692 499.5h1M693 500.5h1M694 501.5h1M695 502.5h1M696 503.5h1M697.5 504v2M698 506.5h1M699 507.5h1M700 508.5h1M701 507.5h1M702 506.5h1M703 505.5h2M705 504.5h1M706 503.5h1M707 502.5h2M709 503.5h4M713 504.5h2M715 505.5h2M717 506.5h1M718 507.5h1M719 508.5h2M721 509.5h1M722 510.5h1M723 511.5h1M724 512.5h1M725 513.5h1M726 514.5h1M727 515.5h1M728 516.5h1M729 517.5h2M731 518.5h2M733 519.5h2M735 520.5h2M737 521.5h4M741 522.5h2M742 521.5h1M743.5 519v2M744.5 516v3M745.5 514v2M746.5 511v3M747.5 508v3M748.5 506v2M749.5 504v2M750 503.5h1M751 502.5h1M752 501.5h2M754 500.5h1M755 499.5h1M756 498.5h1M757 499.5h1M758.5 500v2M759 502.5h1M760 503.5h1M761.5 504v2M762 506.5h1M763 507.5h1M764.5 505v2M765.5 503v2M766.5 501v2M767.5 499v2M768.5 497v2M769.5 495v2M770 494.5h1M771 495.5h1M772.5 496v2M773 498.5h1M774 499.5h1M775.5 500v2M776 502.5h1M777 503.5h2M779 504.5h4M783 505.5h2M785.5 506v2M786.5 508v2M787.5 510v2M788.5 512v2M789.5 514v2M790.5 516v2M791.5 518v2M792 519.5h3M795 520.5h7M802 519.5h4M806.5 517v2M807 516.5h1M808 515.5h1M809.5 513v2M810 512.5h1M811.5 510v2M812 509.5h1M813 508.5h1M814 507.5h1M815 506.5h2M817 505.5h1M818 504.5h1M819 503.5h1M820 502.5h2M822 501.5h2M824 500.5h2M826 499.5h1M827.5 497v2M828 496.5h1M829 495.5h1M830.5 493v2M831 492.5h1M832.5 490v2M833 489.5h1M834 488.5h2M836 487.5h2M838 486.5h2M840 485.5h1M841 484.5h1M842 483.5h1M843 482.5h1M844 481.5h1M845 480.5h1M846 479.5h1M847 478.5h4M851 477.5h4M855 476.5h2M857 475.5h2M859 474.5h2M861 473.5h1M862 474.5h1M863 475.5h1M864 476.5h1M865.5 477v2M866 479.5h1M867 480.5h1M868 481.5h1M869 480.5h2M871 479.5h1M872 478.5h1M873 477.5h2M875 476.5h2M877 475.5h2M879 474.5h2M881 473.5h2M883.5 471v2M884 470.5h1M885 469.5h1M886.5 467v2M887 466.5h1M888.5 464v2M889 463.5h2M891 464.5h2M893 465.5h2M895 466.5h1" fill="none" stroke="#cfcf1e" stroke-width="1"/>
<path d="M63.5 471v2M64.5 473v4M65.5 477v4M66.5 481v4M67.5 485v4M68.5 489v4M69.5 493v4M70.5 497v2M71.5 496v2M72 495.5h1M73 494.5h1M74.5 492v2M75 491.5h1M76.5 489v2M77 488.5h1M78 489.5h2M80 490.5h2M82 491.5h2M84 492.5h1M85.5 493v2M86.5 495v2M87 497.5h1M88.5 498v2M89.5 500v2M90.5 502v2M91 504.5h2M93 505.5h4M97 506.5h3M100 505.5h4M104 504.5h2M105.5 502v2M106.5 498v4M107.5 494v4M108.5 490v4M109.5 486v4M110.5 482v4M111.5 478v4M112.5 475v3M112 476.5h1M113.5 477v4M114.5 481v3M115.5 484v4M116.5 488v4M117.5 492v3M118.5 495v4M119.5 499v4M120.5 503v4M121.5 507v4M122.5 511v4M123.5 515v4M124.5 519v4M125.5 523v4M126.5 527v3M127 529.5h3M130 530.5h4M133 529.5h1M134.5 526v3M135.5 523v3M136.5 520v3M137.5 517v3M138.5 514v3M139.5 511v3M140.5 509v2M141 508.5h2M143 507.5h1M144 506.5h1M145 505.5h2M147.5 503v2M148.5 501v2M149.5 498v3M150.5 496v2M151.5 493v3M152.5 490v3M153.5 488v2M154.5 485v3M155.5 483v2M156.5 480v3M157.5 478v2M158.5 475v3M159.5 472v3M160.5 470v2M161.5 468v2M162 467.5h2M164 466.5h2M166 465.5h2M168 464.5h2M170 465.5h4M174 466.5h2M175 467.5h1M176.5 468v4M177.5 472v4M178.5 476v3M179.5 479v4M180.5 483v4M181.5 487v4M182.5 491v2M183.5 490v2M184.5 488v2M185.5 486v2M186.5 484v2M187.5 482v2M188.5 480v2M189 479.5h2M191 478.5h2M193 477.5h2M195 476.5h2M196.5 474v2M197.5 470v4M198.5 465v5M199.5 461v4M200.5 456v5M201.5 451v5M202.5 447v4M203.5 444v3M204 444.5h7M211 443.5h1M212 442.5h1M213 441.5h2M215 440.5h1M216 439.5h1M217 438.5h1M218.5 436v2M219 435.5h1M220.5 433v2M221.5 431v2M222 430.5h1M223.5 428v2M224.5 427v2M225.5 429v4M226.5 433v3M227.5 436v4M228.5 440v4M229.5 444v3M230.5 447v4M231.5 451v2M232 451.5h1M233.5 449v2M234 448.5h1M235 447.5h1M236.5 445v2M237 444.5h1M238 443.5h1M239 442.5h1M240 441.5h1M241 440.5h2M243 439.5h1M244 438.5h1M245 437.5h2M247 436.5h2M249 435.5h2M251 434.5h2M253 433.5h2M255 432.5h2M257 431.5h2M259 430.5h1M260 429.5h1M261 428.5h1M262 427.5h2M264 426.5h1M265 425.5h1M266 424.5h2M268 423.5h4M272 422.5h5M277 421.5h5M282 420.5h2M284 419.5h2M286 418.5h9M294.5 419v3M295.5 422v6M296.5 428v7M297.5 435v6M298.5 441v7M299.5 448v7M300.5 455v6M301.5 461v4M301 463.5h1M302.5 460v3M303.5 456v4M304.5 453v3M305.5 450v3M306.5 446v4M307.5 443v3M308.5 441v2M309 440.5h2M311 439.5h2M313 438.5h2M315 437.5h1M316 436.5h2M318 435.5h1M319 434.5h1M320 433.5h2M322 432.5h4M326 431.5h4M330 432.5h1M331 433.5h1M332 434.5h2M334 435.5h1M335 436.5h1M336 437.5h1M337 436.5h1M338.5 434v2M339 433.5h1M340 432.5h1M341.5 430v2M342 429.5h1M343 428.5h1M344 429.5h1M345 430.5h1M346 431.5h2M348 432.5h1M349 433.5h1M350 434.5h8M357.5 435v3M358.5 438v7M359.5 445v6M360.5 451v7M361.5 458v7M362.5 465v6M363.5 471v7M364.5 478v5M365.5 483v3M366.5 486v2M367.5 488v3M368.5 491v3M369.5 494v2M370.5 496v3M371.5 499v4M372.5 503v4M373.5 507v4M374.5 511v4M375.5 515v5M376.5 520v4M377.5 524v4M378.5 528v3M379 529.5h2M381 528.5h1M382 527.5h1M383 526.5h2M385 525.5h1M386.5 526v2M387.5 528v2M388.5 530v2M389.5 532v2M390.5 534v2M391.5 536v2M392 538.5h1M393 539.5h1M394 540.5h1M395 541.5h2M397 542.5h1M398 543.5h1M399 544.5h1M400 543.5h1M401.5 541v2M402 540.5h1M403 539.5h1M404.5 537v2M405 536.5h1M406 535.5h2M408 536.5h2M410 537.5h2M412 538.5h3M415 539.5h4M419 540.5h5M424 541.5h4M428.5 539v2M429.5 537v2M430.5 535v2M431.5 533v2M432.5 531v2M433.5 529v2M434.5 526v3M435.5 523v3M436.5 519v4M437.5 516v3M438.5 513v3M439.5 509v4M440.5 506v3M441.5 504v2M441 505.5h1M442.5 506v2M443.5 508v3M444.5 511v2M445.5 513v2M446.5 515v3M447.5 518v2M448.5 520v2M448 520.5h1M449.5 516v4M450.5 513v3M451.5 510v3M452.5 506v4M453.5 503v3M454.5 499v4M455.5 496v3M456.5 492v4M457.5 489v3M458.5 485v4M459.5 481v4M460.5 478v3M461.5 474v4M462.5 472v2M463 471.5h2M465 470.5h2M467 469.5h2M469 468.5h1M470.5 466v2M471.5 464v2M472.5 462v2M473.5 460v2M474.5 458v2M475.5 456v2M476 455.5h2M478 454.5h2M480 453.5h2M482 452.5h2M484.5 450v2M485.5 448v2M486 447.5h1M487.5 445v2M488.5 443v2M489.5 441v2M490 440.5h1M491 439.5h1M492.5 437v2M493 436.5h1M494 435.5h1M495.5 433v2M496 432.5h1M497 431.5h2M499 430.5h2M501 429.5h2M503 428.5h2M504.5 429v2M505.5 431v4M506.5 435v5M507.5 440v4M508.5 444v5M509.5 449v5M510.5 454v4M511.5 458v7M512.5 465v8M513.5 473v8M514.5 481v8M515.5 489v8M516.5 497v8M517.5 505v8M518.5 513v5M519 516.5h1M520.5 514v2M521 513.5h1M522 512.5h1M523.5 510v2M524 509.5h1M525 508.5h1M526 509.5h2M528 510.5h1M529 511.5h1M530 512.5h2M532 513.5h2M534 514.5h4M538 515.5h2M540 516.5h1M541 517.5h1M542 518.5h1M543 519.5h1M544 520.5h1M545 521.5h1M546 522.5h4M550 521.5h4M554 522.5h1M555 523.5h1M556 524.5h2M558 525.5h1M559 526.5h1M560 527.5h1M561 528.5h2M563 529.5h2M565 530.5h2M567 531.5h1M568 530.5h1M569 529.5h1M570 528.5h1M571 527.5h1M572 526.5h1M573 525.5h1M574 524.5h1M575 525.5h2M577 526.5h1M578 527.5h1M579 528.5h2M581 529.5h8M588 528.5h1M589.5 524v4M590.5 520v4M591.5 516v4M592.5 512v4M593.5 508v4M594.5 504v4M595.5 501v3M596 500.5h2M598 499.5h2M600 498.5h2M602.5 495v3M603.5 491v4M604.5 486v5M605.5 482v4M606.5 478v4M607.5 473v5M608.5 469v4M609.5 466v3M610 465.5h1M611 464.5h1M612 463.5h2M614 462.5h1M615 461.5h1M616 460.5h1M617 459.5h1M618 458.5h1M619 457.5h1M620.5 455v2M621 454.5h1M622 453.5h1M623 452.5h1M624 451.5h1M625 450.5h1M626 449.5h2M628 448.5h1M629 447.5h1M630 446.5h1M631.5 444v2M632 443.5h1M633.5 441v2M634.5 439v2M635 438.5h1M636.5 436v2M637 435.5h1M638 436.5h1M639 437.5h1M640 438.5h1M641.5 439v2M642 441.5h1M643 442.5h1M644.5 443v2M645.5 445v3M646.5 448v2M647.5 450v3M648.5 453v3M649.5 456v2M650.5 458v3M651.5 461v2M652.5 460v2M653.5 458v2M654.5 456v2M655.5 454v2M656.5 452v2M657.5 450v2M658.5 449v3M659.5 452v5M660.5 457v6M661.5 463v5M662.5 468v5M663.5 473v6M664.5 479v5M665.5 484v3M666 486.5h1M667 485.5h2M669 484.5h2M671 483.5h2M672.5 484v2M673.5 486v4M674.5 490v4M675.5 494v4M676.5 498v5M677.5 503v4M678.5 507v4M679.5 511v3M680.5 511v2M681 510.5h1M682 509.5h1M683.5 507v2M684 506.5h1M685.5 504v2M686 503.5h1M687.5 504v2M688 506.5h1M689.5 507v2M690.5 509v2M691 511.5h1M692.5 512v2M693 514.5h1M694.5 515v2M695.5 517v2M696.5 519v2M697.5 521v2M698.5 523v2M699.5 525v2M700.5 526v2M701.5 524v2M702.5 522v2M703.5 520v2M704.5 518v2M705.5 516v2M706.5 514v2M707.5 512v2M708 513.5h2M710 514.5h2M712 515.5h2M714 516.5h1M715 517.5h1M716.5 518v2M717 520.5h1M718 521.5h1M719.5 522v2M720 524.5h1M721 525.5h1M722.5 526v2M723 528.5h1M724 529.5h1M725.5 530v2M726 532.5h1M727.5 533v2M728 535.5h1M729 536.5h1M730 537.5h1M731 538.5h2M733 539.5h1M734 540.5h1M735 541.5h2M737 542.5h2M739 543.5h2M741 544.5h2M742.5 542v2M743.5 536v6M744.5 530v6M745.5 524v6M746.5 518v6M747.5 512v6M748.5 506v6M749.5 502v4M750.5 500v2M751.5 498v2M752 497.5h1M753.5 495v2M754.5 493v2M755.5 491v2M756.5 490v2M757.5 492v2M758.5 494v3M759.5 497v2M760.5 499v3M761.5 502v3M762.5 505v2M763.5 507v2M763 507.5h1M764.5 503v4M765.5 500v3M766.5 497v3M767.5 493v4M768.5 490v3M769.5 486v4M770.5 484v2M770 485.5h1M771.5 486v3M772.5 489v3M773.5 492v2M774.5 494v3M775.5 497v3M776.5 500v3M777.5 503v2M778 504.5h1M779 505.5h2M781 506.5h2M783 507.5h2M784 508.5h1M785.5 509v4M786.5 513v3M787.5 516v3M788.5 519v4M789.5 523v3M790.5 526v4M791.5 530v2M792 531.5h1M793 532.5h4M797 533.5h3M800 532.5h2M802 531.5h2M804 530.5h2M805 529.5h1M806.5 526v3M807.5 523v3M808.5 520v3M809.5 516v4M810.5 513v3M811.5 510v3M812.5 508v2M813.5 506v2M814.5 504v2M815.5 502v2M816.5 500v2M817.5 498v2M818.5 496v2M819 495.5h1M820 494.5h1M821.5 492v2M822 491.5h1M823 490.5h1M824.5 488v2M825 487.5h1M826.5 485v2M827.5 483v2M828.5 480v3M829.5 478v2M830.5 476v2M831.5 473v3M832.5 471v2M833.5 469v2M834 468.5h2M836 467.5h1M837 466.5h1M838 465.5h2M840 464.5h1M841.5 462v2M842.5 460v2M843 459.5h1M844.5 457v2M845.5 455v2M846.5 453v2M847 452.5h4M851 451.5h4M855 450.5h1M856 449.5h1M857 448.5h2M859 447.5h1M860 446.5h1M861.5 445v2M862.5 447v3M863.5 450v4M864.5 454v3M865.5 457v3M866.5 460v4M867.5 464v3M868.5 467v2M869 467.5h1M870.5 465v2M871 464.5h1M872 463.5h1M873.5 461v2M874 460.5h1M875 459.5h1M876 458.5h1M877 457.5h1M878 456.5h2M880 455.5h1M881 454.5h1M882 453.5h1M883.5 451v2M884.5 449v2M885.5 447v2M886.5 445v2M887.5 443v2M888.5 441v2M889.5 439v2M890 440.5h1M891.5 441v2M892 443.5h1M893 444.5h1M894.5 445v2M895 447.5h1" fill="none" stroke="#e6e6e6" stroke-width="1"/>
</g>
<text x="91" y="25.5" font-size="18" fill="#f2f2f2" text-anchor="start" font-weight="normal" textLength="72" lengthAdjust="spacingAndGlyphs">美元瑞郎</text>
<text x="165.5" y="25" font-size="18" fill="#f0b040"><tspan font-size="15" textLength="8.5" lengthAdjust="spacingAndGlyphs">&lt;</tspan><tspan x="176.5" y="25.5" textLength="37" lengthAdjust="spacingAndGlyphs">日线</tspan><tspan x="214.5" y="25" font-size="15" textLength="8.5" lengthAdjust="spacingAndGlyphs">&gt;</tspan></text>
<g><rect x="255" y="8.5" width="1.4" height="19" fill="#8a8a8a"/><rect x="238.5" y="26.3" width="17.9" height="1.4" fill="#8a8a8a"/><rect x="237.5" y="7.2" width="16.4" height="18.6" fill="#fbfbff" stroke="#14148c" stroke-width="1.4"/><path d="M238.3 17.6L243 11.8L247.6 16.2L250.5 13H253.2" fill="none" stroke="#f01818" stroke-width="1.7"/><path d="M238.3 22.4L243.4 16.7L247.6 20.9L250.5 17.7H253.2" fill="none" stroke="#1818f0" stroke-width="1.7"/></g>
<text x="260" y="25.7" font-size="19" fill="#f2f2f2" text-anchor="start" font-weight="normal" textLength="199" lengthAdjust="spacingAndGlyphs">MA(5,10,30,60,100,200)</text>
<text x="467.5" y="25.7" font-size="19" fill="#f2f2f2" text-anchor="start" font-weight="normal" textLength="100" lengthAdjust="spacingAndGlyphs">MA5:0.9689</text>
<text x="581" y="25.7" font-size="19" fill="#cccc1e" text-anchor="start" font-weight="normal" textLength="111.5" lengthAdjust="spacingAndGlyphs">MA10:0.9654</text>
<text x="705" y="25.7" font-size="19" fill="#e422e4" text-anchor="start" font-weight="normal" textLength="111" lengthAdjust="spacingAndGlyphs">MA30:0.9579</text>
<text x="830" y="25.7" font-size="19" fill="#22d322" text-anchor="start" font-weight="normal" textLength="110" lengthAdjust="spacingAndGlyphs">MA60:0.9649</text>
<text x="954.5" y="25.7" font-size="19" fill="#8a8a8a" text-anchor="start" font-weight="normal" textLength="109" lengthAdjust="spacingAndGlyphs">MA100:0.967</text>
<rect x="1174.6" y="5.6" width="111.6" height="22.2" fill="#030303" stroke="#8e8e8e" stroke-width="1.4"/>
<text x="1184" y="24.3" font-size="18" fill="#8e8e8e" text-anchor="start" font-weight="normal" textLength="73" lengthAdjust="spacingAndGlyphs">全部主题</text>
<path d="M1259 12.3H1271.8L1265.4 24.6Z" fill="#949494"/>
<rect x="1291.7" y="7.4" width="19.6" height="19.4" fill="#050505" stroke="#a9a9a9" stroke-width="1.5"/>
<rect x="1315.7" y="7.4" width="19.6" height="19.4" fill="#050505" stroke="#a9a9a9" stroke-width="1.5"/>
<rect x="1339.8" y="7.4" width="19.6" height="19.4" fill="#050505" stroke="#a9a9a9" stroke-width="1.5"/>
<rect x="1363.7" y="7.4" width="19.6" height="19.4" fill="#050505" stroke="#a9a9a9" stroke-width="1.5"/>
<g fill="#a9a9a9"><rect x="1300.1" y="9.8" width="2.8" height="3.6"/><rect x="1300.1" y="20.1" width="2.8" height="3.9"/><rect x="1300.1" y="15.8" width="2.8" height="2.4"/><rect x="1294.1" y="15.8" width="4" height="2.4"/><rect x="1304.5" y="15.8" width="4.3" height="2.4"/></g>
<g stroke="#a9a9a9" fill="#a9a9a9" stroke-width="1.3"><path d="M1319.8 10V24.6M1318 22.7H1332.8" fill="none"/><path d="M1318.2 12L1319.8 9.6L1321.4 12ZM1318.2 22.7L1320 21.3V24.1ZM1333.2 22.7L1331 21.3V24.1Z" stroke="none"/><path d="M1324.7 11.2V19.7" fill="none" stroke-width="1.5"/><path d="M1326.5 15.4L1329.9 11.9V18.8Z" stroke="none"/></g>
<g stroke="#a9a9a9" fill="#a9a9a9" stroke-width="1.3"><path d="M1343.9 10V24.6M1342.1 22.7H1356.7" fill="none"/><path d="M1342.3 12L1343.9 9.6L1345.5 12ZM1342.2 22.7L1344 21.3V24.1ZM1357.2 22.7L1355 21.3V24.1Z" stroke="none"/><path d="M1348.5 11.2V21.2L1355.6 16.5Z" stroke="none"/></g>
<g stroke="#a9a9a9" fill="#a9a9a9"><rect x="1367" y="10.4" width="4" height="12.6" fill="none" stroke-width="1.3"/><path d="M1369.5 16.5H1376" stroke-width="2" fill="none"/><path d="M1375.1 12.6V20.4L1379.8 16.5Z" stroke="none"/></g>
<text x="92" y="615.5" font-size="19" fill="#f2f2f2" text-anchor="start" font-weight="normal" textLength="100" lengthAdjust="spacingAndGlyphs">RSI(6,12,24)</text>
<text x="200" y="615.5" font-size="19" fill="#f2f2f2" text-anchor="start" font-weight="normal" textLength="108.5" lengthAdjust="spacingAndGlyphs">RSI1:75.7133</text>
<text x="323" y="615.5" font-size="19" fill="#cccc1e" text-anchor="start" font-weight="normal" textLength="109.5" lengthAdjust="spacingAndGlyphs">RSI2:64.8468</text>
<text x="446.3" y="615.5" font-size="19" fill="#e422e4" text-anchor="start" font-weight="normal" textLength="108.7" lengthAdjust="spacingAndGlyphs">RSI3:56.3855</text>
<path d="M2.4 598.7L5.4 596.4M3.9 604.2H7.1M2.4 611.1L5.4 613.5" stroke="#e00808" stroke-width="1.7" fill="none"/><rect x="0" y="601.7" width="1.2" height="6.3" fill="#f4f4f4"/>
<text x="4" y="840" font-size="18" fill="#f4b544" text-anchor="start" font-weight="bold" textLength="37" lengthAdjust="spacingAndGlyphs">日线</text>
<path d="M49.5 838.5H63.5L56.5 825.5Z" fill="#f0a838"/>
<text x="213" y="836.3" font-size="19" fill="#aeb6be" text-anchor="start" font-weight="bold" textLength="65.5" lengthAdjust="spacingAndGlyphs">2022/04</text>
<rect x="209.8" y="817.5" width="1.5" height="7.8" fill="#222"/>
<text x="433.8" y="836.3" font-size="19" fill="#aeb6be" text-anchor="start" font-weight="bold" textLength="65.5" lengthAdjust="spacingAndGlyphs">2022/05</text>
<rect x="430.6" y="817.5" width="1.5" height="7.8" fill="#222"/>
<text x="664.3" y="836.3" font-size="19" fill="#aeb6be" text-anchor="start" font-weight="bold" textLength="65.5" lengthAdjust="spacingAndGlyphs">2022/06</text>
<rect x="661.1" y="817.5" width="1.5" height="7.8" fill="#222"/>
<text x="895.5" y="836.3" font-size="19" fill="#aeb6be" text-anchor="start" font-weight="bold" textLength="65.5" lengthAdjust="spacingAndGlyphs">2022/07</text>
<rect x="892.3" y="817.5" width="1.5" height="7.8" fill="#222"/>
<text x="1115.5" y="836.3" font-size="19" fill="#aeb6be" text-anchor="start" font-weight="bold" textLength="65.5" lengthAdjust="spacingAndGlyphs">2022/08</text>
<rect x="1112.3" y="817.5" width="1.5" height="7.8" fill="#222"/>
</svg></body></html>
